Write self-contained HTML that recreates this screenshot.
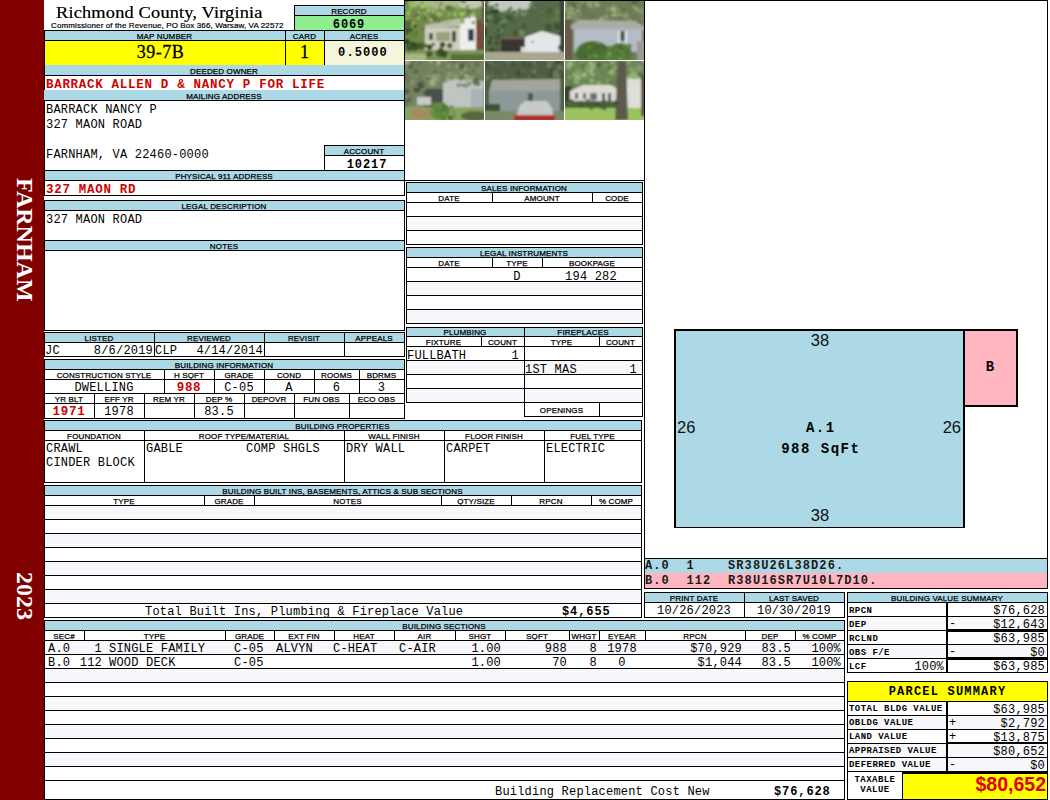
<!DOCTYPE html><html><head><meta charset="utf-8"><style>
*{margin:0;padding:0;box-sizing:border-box}
html,body{width:1050px;height:800px;overflow:hidden;background:#fff}
#p{position:relative;width:1050px;height:800px;overflow:hidden}
#p>div{position:absolute;white-space:nowrap}
.h{font-family:"Liberation Sans",sans-serif;font-size:8px;font-weight:normal;line-height:10px;color:#000;-webkit-text-stroke:0.25px #000;letter-spacing:0.15px}
.m{font-family:"Liberation Mono",monospace;font-size:12px;line-height:14px;color:#000;letter-spacing:0.2px}
.mb{font-family:"Liberation Mono",monospace;font-size:12px;font-weight:bold;line-height:14px;color:#000;letter-spacing:0.9px}
.mr{font-family:"Liberation Mono",monospace;font-size:12.5px;font-weight:bold;line-height:14px;color:#d00000;letter-spacing:0.7px}
.mbs{font-family:"Liberation Mono",monospace;font-size:12px;font-weight:bold;line-height:14px;color:#1a1a1a;letter-spacing:1.1px}
.big{font-family:"Liberation Serif",serif;font-size:17.5px;line-height:22px;color:#000;-webkit-text-stroke:0.3px #000}
.title{font-family:"Liberation Serif",serif;font-size:18.5px;line-height:22px;color:#000;-webkit-text-stroke:0.25px #000;transform:scaleY(0.93);transform-origin:0 17px;letter-spacing:0.1px}
.sub{font-family:"Liberation Sans",sans-serif;font-size:8px;line-height:10px;color:#000;letter-spacing:0.11px;-webkit-text-stroke:0.2px #000}
.sk{font-family:"Liberation Sans",sans-serif;font-size:16.5px;line-height:20px;color:#111}
.skb{font-family:"Liberation Mono",monospace;font-weight:bold;font-size:14px;line-height:18px;color:#000;letter-spacing:1.5px}
.lab{font-family:"Liberation Mono",monospace;font-size:9px;font-weight:bold;line-height:12px;color:#000;letter-spacing:0.45px}
.psum{font-family:"Liberation Mono",monospace;font-size:12px;font-weight:bold;line-height:16px;color:#000;letter-spacing:1.2px}
.tax{font-family:"Liberation Sans",sans-serif;font-size:19.5px;font-weight:bold;line-height:24px;color:#e00000}
.vt{font-family:"Liberation Serif",serif;font-size:24px;font-weight:bold;color:#fff;writing-mode:vertical-rl;line-height:32px}
</style></head><body><div id="p"><div style="left:0px;top:0px;width:44px;height:800px;background:#800000"></div>
<div class="vt" style="left:9px;top:170px;width:32px;height:140px;text-align:center;letter-spacing:0px">FARNHAM</div>
<div class="vt" style="left:9px;top:566px;width:32px;height:60px;text-align:center;letter-spacing:0px">2023</div>
<div class="title" style="left:56px;top:1px;width:244px;text-align:left;">Richmond County, Virginia</div>
<div class="sub" style="left:51px;top:21px;width:249px;text-align:left;">Commissioner of the Revenue, PO Box 366, Warsaw, VA 22572</div>
<div style="left:294px;top:5px;width:110px;height:10px;background:#add8e6"></div>
<div style="left:294px;top:15px;width:110px;height:15px;background:#90ee90"></div>
<div style="left:294px;top:5px;width:111px;height:1px;background:#000"></div>
<div style="left:294px;top:30px;width:111px;height:1px;background:#000"></div>
<div style="left:294px;top:5px;width:1px;height:26px;background:#000"></div>
<div style="left:404px;top:5px;width:1px;height:26px;background:#000"></div>
<div style="left:294px;top:15px;width:111px;height:1px;background:#000"></div>
<div class="h" style="left:294px;top:7px;width:110px;text-align:center;">RECORD</div>
<div class="mb" style="left:294px;top:18px;width:110px;text-align:center;">6069</div>
<div style="left:44px;top:30px;width:360px;height:10px;background:#add8e6"></div>
<div style="left:44px;top:40px;width:280px;height:25px;background:#ffff00"></div>
<div style="left:324px;top:40px;width:80px;height:25px;background:#f5f5dc"></div>
<div style="left:44px;top:30px;width:361px;height:1px;background:#000"></div>
<div style="left:44px;top:40px;width:361px;height:1px;background:#000"></div>
<div style="left:44px;top:65px;width:361px;height:1px;background:#000"></div>
<div style="left:44px;top:30px;width:1px;height:36px;background:#000"></div>
<div style="left:285px;top:30px;width:1px;height:36px;background:#000"></div>
<div style="left:324px;top:30px;width:1px;height:36px;background:#000"></div>
<div style="left:404px;top:0px;width:1px;height:181px;background:#000"></div>
<div class="h" style="left:44px;top:32px;width:241px;text-align:center;">MAP NUMBER</div>
<div class="h" style="left:285px;top:32px;width:39px;text-align:center;">CARD</div>
<div class="h" style="left:324px;top:32px;width:80px;text-align:center;">ACRES</div>
<div class="big" style="left:40px;top:41px;width:241px;text-align:center;font-size:18px;letter-spacing:0.5px">39-7B</div>
<div class="big" style="left:285px;top:41px;width:39px;text-align:center;font-size:18px">1</div>
<div class="mb" style="left:323px;top:46px;width:80px;text-align:center;letter-spacing:1.1px">0.5000</div>
<div style="left:44px;top:65px;width:360px;height:10px;background:#add8e6"></div>
<div style="left:44px;top:75px;width:361px;height:1px;background:#000"></div>
<div style="left:44px;top:65px;width:1px;height:106px;background:#000"></div>
<div class="h" style="left:44px;top:67px;width:360px;text-align:center;">DEEDED OWNER</div>
<div class="mr" style="left:46px;top:78px;width:358px;text-align:left;">BARRACK ALLEN D &amp; NANCY P FOR LIFE</div>
<div style="left:44px;top:90px;width:361px;height:1px;background:#000"></div>
<div style="left:44px;top:90px;width:360px;height:10px;background:#add8e6"></div>
<div style="left:44px;top:100px;width:361px;height:1px;background:#000"></div>
<div class="h" style="left:44px;top:92px;width:360px;text-align:center;">MAILING ADDRESS</div>
<div class="m" style="left:46px;top:103px;width:274px;text-align:left;">BARRACK NANCY P</div>
<div class="m" style="left:46px;top:118px;width:274px;text-align:left;">327 MAON ROAD</div>
<div class="m" style="left:46px;top:148px;width:274px;text-align:left;">FARNHAM, VA 22460-0000</div>
<div style="left:324px;top:145px;width:80px;height:10px;background:#add8e6"></div>
<div style="left:324px;top:145px;width:81px;height:1px;background:#000"></div>
<div style="left:324px;top:170px;width:81px;height:1px;background:#000"></div>
<div style="left:324px;top:145px;width:1px;height:26px;background:#000"></div>
<div style="left:404px;top:145px;width:1px;height:26px;background:#000"></div>
<div style="left:324px;top:155px;width:81px;height:1px;background:#000"></div>
<div class="h" style="left:324px;top:147px;width:80px;text-align:center;">ACCOUNT</div>
<div class="mb" style="left:327px;top:158px;width:80px;text-align:center;">10217</div>
<div style="left:44px;top:170px;width:361px;height:1px;background:#000"></div>
<div style="left:44px;top:170px;width:360px;height:10px;background:#add8e6"></div>
<div style="left:44px;top:180px;width:361px;height:1px;background:#000"></div>
<div style="left:44px;top:170px;width:361px;height:1px;background:#000"></div>
<div style="left:44px;top:195px;width:361px;height:1px;background:#000"></div>
<div style="left:44px;top:170px;width:1px;height:26px;background:#000"></div>
<div style="left:404px;top:170px;width:1px;height:26px;background:#000"></div>
<div class="h" style="left:44px;top:172px;width:360px;text-align:center;">PHYSICAL 911 ADDRESS</div>
<div class="mr" style="left:46px;top:183px;width:358px;text-align:left;">327 MAON RD</div>
<div style="left:44px;top:200px;width:360px;height:10px;background:#add8e6"></div>
<div style="left:44px;top:210px;width:361px;height:1px;background:#000"></div>
<div class="h" style="left:44px;top:202px;width:360px;text-align:center;">LEGAL DESCRIPTION</div>
<div class="m" style="left:46px;top:213px;width:358px;text-align:left;">327 MAON ROAD</div>
<div style="left:44px;top:240px;width:360px;height:10px;background:#add8e6"></div>
<div style="left:44px;top:240px;width:361px;height:1px;background:#000"></div>
<div style="left:44px;top:250px;width:361px;height:1px;background:#000"></div>
<div class="h" style="left:44px;top:242px;width:360px;text-align:center;">NOTES</div>
<div style="left:44px;top:200px;width:361px;height:1px;background:#000"></div>
<div style="left:44px;top:330px;width:361px;height:1px;background:#000"></div>
<div style="left:44px;top:200px;width:1px;height:131px;background:#000"></div>
<div style="left:404px;top:200px;width:1px;height:131px;background:#000"></div>
<div style="left:44px;top:332px;width:360px;height:10px;background:#add8e6"></div>
<div style="left:44px;top:332px;width:361px;height:1px;background:#000"></div>
<div style="left:44px;top:356px;width:361px;height:1px;background:#000"></div>
<div style="left:44px;top:332px;width:1px;height:25px;background:#000"></div>
<div style="left:404px;top:332px;width:1px;height:25px;background:#000"></div>
<div style="left:44px;top:342px;width:361px;height:1px;background:#000"></div>
<div style="left:154px;top:332px;width:1px;height:24px;background:#000"></div>
<div style="left:264px;top:332px;width:1px;height:24px;background:#000"></div>
<div style="left:344px;top:332px;width:1px;height:24px;background:#000"></div>
<div class="h" style="left:44px;top:334px;width:110px;text-align:center;">LISTED</div>
<div class="h" style="left:154px;top:334px;width:110px;text-align:center;">REVIEWED</div>
<div class="h" style="left:264px;top:334px;width:80px;text-align:center;">REVISIT</div>
<div class="h" style="left:344px;top:334px;width:60px;text-align:center;">APPEALS</div>
<div class="m" style="left:45px;top:344px;width:109px;text-align:left;">JC</div>
<div class="m" style="left:44px;top:344px;width:109px;text-align:right;">8/6/2019</div>
<div class="m" style="left:155px;top:344px;width:109px;text-align:left;">CLP</div>
<div class="m" style="left:154px;top:344px;width:109px;text-align:right;">4/14/2014</div>
<div style="left:44px;top:360px;width:360px;height:9px;background:#add8e6"></div>
<div style="left:44px;top:359px;width:361px;height:1px;background:#000"></div>
<div style="left:44px;top:418px;width:361px;height:1px;background:#000"></div>
<div style="left:44px;top:359px;width:1px;height:60px;background:#000"></div>
<div style="left:404px;top:359px;width:1px;height:60px;background:#000"></div>
<div style="left:44px;top:369px;width:361px;height:1px;background:#000"></div>
<div style="left:44px;top:379px;width:361px;height:1px;background:#000"></div>
<div style="left:44px;top:393px;width:361px;height:1px;background:#000"></div>
<div style="left:44px;top:403px;width:361px;height:1px;background:#000"></div>
<div class="h" style="left:44px;top:361px;width:360px;text-align:center;">BUILDING INFORMATION</div>
<div class="h" style="left:44px;top:371px;width:120px;text-align:center;">CONSTRUCTION STYLE</div>
<div class="m" style="left:44px;top:381px;width:120px;text-align:center;">DWELLING</div>
<div style="left:164px;top:369px;width:1px;height:24px;background:#000"></div>
<div class="h" style="left:164px;top:371px;width:50px;text-align:center;">H SQFT</div>
<div class="mr" style="left:164px;top:381px;width:50px;text-align:center;">988</div>
<div style="left:214px;top:369px;width:1px;height:24px;background:#000"></div>
<div class="h" style="left:214px;top:371px;width:50px;text-align:center;">GRADE</div>
<div class="m" style="left:214px;top:381px;width:50px;text-align:center;">C-05</div>
<div style="left:264px;top:369px;width:1px;height:24px;background:#000"></div>
<div class="h" style="left:264px;top:371px;width:50px;text-align:center;">COND</div>
<div class="m" style="left:264px;top:381px;width:50px;text-align:center;">A</div>
<div style="left:314px;top:369px;width:1px;height:24px;background:#000"></div>
<div class="h" style="left:314px;top:371px;width:45px;text-align:center;">ROOMS</div>
<div class="m" style="left:314px;top:381px;width:45px;text-align:center;">6</div>
<div style="left:359px;top:369px;width:1px;height:24px;background:#000"></div>
<div class="h" style="left:359px;top:371px;width:45px;text-align:center;">BDRMS</div>
<div class="m" style="left:359px;top:381px;width:45px;text-align:center;">3</div>
<div class="h" style="left:44px;top:395px;width:50px;text-align:center;">YR BLT</div>
<div class="mr" style="left:44px;top:405px;width:50px;text-align:center;">1971</div>
<div style="left:94px;top:393px;width:1px;height:25px;background:#000"></div>
<div class="h" style="left:94px;top:395px;width:50px;text-align:center;">EFF YR</div>
<div class="m" style="left:94px;top:405px;width:50px;text-align:center;">1978</div>
<div style="left:144px;top:393px;width:1px;height:25px;background:#000"></div>
<div class="h" style="left:144px;top:395px;width:50px;text-align:center;">REM YR</div>
<div style="left:194px;top:393px;width:1px;height:25px;background:#000"></div>
<div class="h" style="left:194px;top:395px;width:50px;text-align:center;">DEP %</div>
<div class="m" style="left:194px;top:405px;width:50px;text-align:center;">83.5</div>
<div style="left:244px;top:393px;width:1px;height:25px;background:#000"></div>
<div class="h" style="left:244px;top:395px;width:50px;text-align:center;">DEPOVR</div>
<div style="left:294px;top:393px;width:1px;height:25px;background:#000"></div>
<div class="h" style="left:294px;top:395px;width:55px;text-align:center;">FUN OBS</div>
<div style="left:349px;top:393px;width:1px;height:25px;background:#000"></div>
<div class="h" style="left:349px;top:395px;width:55px;text-align:center;">ECO OBS</div>
<div style="left:44px;top:420px;width:597px;height:10px;background:#add8e6"></div>
<div style="left:44px;top:420px;width:598px;height:1px;background:#000"></div>
<div style="left:44px;top:482px;width:598px;height:1px;background:#000"></div>
<div style="left:44px;top:420px;width:1px;height:63px;background:#000"></div>
<div style="left:641px;top:420px;width:1px;height:63px;background:#000"></div>
<div style="left:44px;top:430px;width:598px;height:1px;background:#000"></div>
<div style="left:44px;top:440px;width:598px;height:1px;background:#000"></div>
<div class="h" style="left:44px;top:422px;width:597px;text-align:center;">BUILDING PROPERTIES</div>
<div class="h" style="left:44px;top:432px;width:100px;text-align:center;">FOUNDATION</div>
<div style="left:144px;top:430px;width:1px;height:52px;background:#000"></div>
<div class="h" style="left:144px;top:432px;width:200px;text-align:center;">ROOF TYPE/MATERIAL</div>
<div style="left:344px;top:430px;width:1px;height:52px;background:#000"></div>
<div class="h" style="left:344px;top:432px;width:100px;text-align:center;">WALL FINISH</div>
<div style="left:444px;top:430px;width:1px;height:52px;background:#000"></div>
<div class="h" style="left:444px;top:432px;width:100px;text-align:center;">FLOOR FINISH</div>
<div style="left:544px;top:430px;width:1px;height:52px;background:#000"></div>
<div class="h" style="left:544px;top:432px;width:97px;text-align:center;">FUEL TYPE</div>
<div class="m" style="left:46px;top:442px;width:98px;text-align:left;">CRAWL</div>
<div class="m" style="left:46px;top:456px;width:98px;text-align:left;">CINDER BLOCK</div>
<div class="m" style="left:146px;top:442px;width:198px;text-align:left;">GABLE</div>
<div class="m" style="left:246px;top:442px;width:98px;text-align:left;">COMP SHGLS</div>
<div class="m" style="left:346px;top:442px;width:98px;text-align:left;">DRY WALL</div>
<div class="m" style="left:446px;top:442px;width:98px;text-align:left;">CARPET</div>
<div class="m" style="left:546px;top:442px;width:95px;text-align:left;">ELECTRIC</div>
<div style="left:44px;top:485px;width:597px;height:10px;background:#add8e6"></div>
<div style="left:45px;top:505px;width:596px;height:14px;background:#f7f7fc"></div>
<div style="left:45px;top:533px;width:596px;height:14px;background:#f7f7fc"></div>
<div style="left:45px;top:561px;width:596px;height:14px;background:#f7f7fc"></div>
<div style="left:45px;top:589px;width:596px;height:14px;background:#f7f7fc"></div>
<div style="left:44px;top:485px;width:598px;height:1px;background:#000"></div>
<div style="left:44px;top:617px;width:598px;height:1px;background:#000"></div>
<div style="left:44px;top:485px;width:1px;height:133px;background:#000"></div>
<div style="left:641px;top:485px;width:1px;height:133px;background:#000"></div>
<div style="left:44px;top:495px;width:598px;height:1px;background:#000"></div>
<div style="left:44px;top:505px;width:598px;height:1px;background:#000"></div>
<div style="left:44px;top:519px;width:598px;height:1px;background:#000"></div>
<div style="left:44px;top:533px;width:598px;height:1px;background:#000"></div>
<div style="left:44px;top:547px;width:598px;height:1px;background:#000"></div>
<div style="left:44px;top:561px;width:598px;height:1px;background:#000"></div>
<div style="left:44px;top:575px;width:598px;height:1px;background:#000"></div>
<div style="left:44px;top:589px;width:598px;height:1px;background:#000"></div>
<div style="left:44px;top:603px;width:598px;height:1px;background:#000"></div>
<div class="h" style="left:44px;top:487px;width:597px;text-align:center;">BUILDING BUILT INS, BASEMENTS, ATTICS &amp; SUB SECTIONS</div>
<div class="h" style="left:44px;top:497px;width:160px;text-align:center;">TYPE</div>
<div style="left:204px;top:495px;width:1px;height:10px;background:#000"></div>
<div class="h" style="left:204px;top:497px;width:50px;text-align:center;">GRADE</div>
<div style="left:254px;top:495px;width:1px;height:10px;background:#000"></div>
<div class="h" style="left:254px;top:497px;width:187px;text-align:center;">NOTES</div>
<div style="left:441px;top:495px;width:1px;height:10px;background:#000"></div>
<div class="h" style="left:441px;top:497px;width:70px;text-align:center;">QTY/SIZE</div>
<div style="left:511px;top:495px;width:1px;height:10px;background:#000"></div>
<div class="h" style="left:511px;top:497px;width:80px;text-align:center;">RPCN</div>
<div style="left:591px;top:495px;width:1px;height:10px;background:#000"></div>
<div class="h" style="left:591px;top:497px;width:50px;text-align:center;">% COMP</div>
<div class="m" style="left:145px;top:605px;width:496px;text-align:left;">Total Built Ins, Plumbing &amp; Fireplace Value</div>
<div class="mb" style="left:562px;top:605px;width:79px;text-align:left;">$4,655</div>
<div style="left:404px;top:180px;width:241px;height:1px;background:#000"></div>
<div style="left:644px;top:0px;width:1px;height:589px;background:#000"></div>
<div style="left:404px;top:0px;width:241px;height:1px;background:#000"></div>
<div style="left:406px;top:182px;width:236px;height:10px;background:#add8e6"></div>
<div style="left:407px;top:216px;width:235px;height:14px;background:#f7f7fc"></div>
<div style="left:406px;top:182px;width:237px;height:1px;background:#000"></div>
<div style="left:406px;top:244px;width:237px;height:1px;background:#000"></div>
<div style="left:406px;top:182px;width:1px;height:63px;background:#000"></div>
<div style="left:642px;top:182px;width:1px;height:63px;background:#000"></div>
<div style="left:406px;top:192px;width:237px;height:1px;background:#000"></div>
<div style="left:406px;top:202px;width:237px;height:1px;background:#000"></div>
<div style="left:406px;top:216px;width:237px;height:1px;background:#000"></div>
<div style="left:406px;top:230px;width:237px;height:1px;background:#000"></div>
<div class="h" style="left:406px;top:184px;width:236px;text-align:center;">SALES INFORMATION</div>
<div class="h" style="left:406px;top:194px;width:86px;text-align:center;">DATE</div>
<div class="h" style="left:492px;top:194px;width:100px;text-align:center;">AMOUNT</div>
<div class="h" style="left:592px;top:194px;width:50px;text-align:center;">CODE</div>
<div style="left:492px;top:192px;width:1px;height:10px;background:#000"></div>
<div style="left:592px;top:192px;width:1px;height:10px;background:#000"></div>
<div style="left:406px;top:247px;width:236px;height:10px;background:#add8e6"></div>
<div style="left:407px;top:281px;width:235px;height:14px;background:#f7f7fc"></div>
<div style="left:407px;top:309px;width:235px;height:14px;background:#f7f7fc"></div>
<div style="left:406px;top:247px;width:237px;height:1px;background:#000"></div>
<div style="left:406px;top:323px;width:237px;height:1px;background:#000"></div>
<div style="left:406px;top:247px;width:1px;height:77px;background:#000"></div>
<div style="left:642px;top:247px;width:1px;height:77px;background:#000"></div>
<div style="left:406px;top:257px;width:237px;height:1px;background:#000"></div>
<div style="left:406px;top:267px;width:237px;height:1px;background:#000"></div>
<div style="left:406px;top:281px;width:237px;height:1px;background:#000"></div>
<div style="left:406px;top:295px;width:237px;height:1px;background:#000"></div>
<div style="left:406px;top:309px;width:237px;height:1px;background:#000"></div>
<div class="h" style="left:406px;top:249px;width:236px;text-align:center;">LEGAL INSTRUMENTS</div>
<div class="h" style="left:406px;top:259px;width:86px;text-align:center;">DATE</div>
<div class="h" style="left:492px;top:259px;width:50px;text-align:center;">TYPE</div>
<div class="h" style="left:542px;top:259px;width:100px;text-align:center;">BOOKPAGE</div>
<div style="left:492px;top:257px;width:1px;height:10px;background:#000"></div>
<div style="left:542px;top:257px;width:1px;height:10px;background:#000"></div>
<div class="m" style="left:492px;top:270px;width:50px;text-align:center;">D</div>
<div class="m" style="left:541px;top:270px;width:100px;text-align:center;">194 282</div>
<div style="left:406px;top:327px;width:118px;height:10px;background:#add8e6"></div>
<div style="left:407px;top:360px;width:117px;height:14px;background:#f7f7fc"></div>
<div style="left:407px;top:388px;width:117px;height:14px;background:#f7f7fc"></div>
<div style="left:406px;top:327px;width:119px;height:1px;background:#000"></div>
<div style="left:406px;top:402px;width:119px;height:1px;background:#000"></div>
<div style="left:406px;top:327px;width:1px;height:76px;background:#000"></div>
<div style="left:524px;top:327px;width:1px;height:76px;background:#000"></div>
<div style="left:406px;top:336px;width:119px;height:1px;background:#000"></div>
<div style="left:406px;top:346px;width:119px;height:1px;background:#000"></div>
<div style="left:406px;top:360px;width:119px;height:1px;background:#000"></div>
<div style="left:406px;top:374px;width:119px;height:1px;background:#000"></div>
<div style="left:406px;top:388px;width:119px;height:1px;background:#000"></div>
<div class="h" style="left:406px;top:328px;width:118px;text-align:center;">PLUMBING</div>
<div class="h" style="left:406px;top:338px;width:75px;text-align:center;">FIXTURE</div>
<div class="h" style="left:481px;top:338px;width:43px;text-align:center;">COUNT</div>
<div style="left:481px;top:336px;width:1px;height:10px;background:#000"></div>
<div class="m" style="left:407px;top:349px;width:117px;text-align:left;">FULLBATH</div>
<div class="m" style="left:406px;top:349px;width:113px;text-align:right;">1</div>
<div style="left:524px;top:327px;width:118px;height:10px;background:#add8e6"></div>
<div style="left:525px;top:360px;width:117px;height:14px;background:#f7f7fc"></div>
<div style="left:525px;top:388px;width:117px;height:14px;background:#f7f7fc"></div>
<div style="left:524px;top:327px;width:119px;height:1px;background:#000"></div>
<div style="left:524px;top:416px;width:119px;height:1px;background:#000"></div>
<div style="left:524px;top:327px;width:1px;height:90px;background:#000"></div>
<div style="left:642px;top:327px;width:1px;height:90px;background:#000"></div>
<div style="left:524px;top:336px;width:119px;height:1px;background:#000"></div>
<div style="left:524px;top:346px;width:119px;height:1px;background:#000"></div>
<div style="left:524px;top:360px;width:119px;height:1px;background:#000"></div>
<div style="left:524px;top:374px;width:119px;height:1px;background:#000"></div>
<div style="left:524px;top:388px;width:119px;height:1px;background:#000"></div>
<div style="left:524px;top:402px;width:119px;height:1px;background:#000"></div>
<div class="h" style="left:524px;top:328px;width:118px;text-align:center;">FIREPLACES</div>
<div class="h" style="left:524px;top:338px;width:75px;text-align:center;">TYPE</div>
<div class="h" style="left:599px;top:338px;width:43px;text-align:center;">COUNT</div>
<div style="left:599px;top:336px;width:1px;height:10px;background:#000"></div>
<div class="m" style="left:525px;top:363px;width:117px;text-align:left;">1ST MAS</div>
<div class="m" style="left:524px;top:363px;width:113px;text-align:right;">1</div>
<div style="left:599px;top:402px;width:1px;height:14px;background:#000"></div>
<div class="h" style="left:524px;top:406px;width:75px;text-align:center;">OPENINGS</div>
<div style="left:1047px;top:0px;width:1px;height:589px;background:#000"></div>
<div style="left:644px;top:0px;width:404px;height:1px;background:#000"></div>
<div style="left:645px;top:559px;width:402px;height:14px;background:#add8e6"></div>
<div style="left:645px;top:573px;width:402px;height:15px;background:#ffb6c1"></div>
<div style="left:644px;top:558px;width:404px;height:1px;background:#000"></div>
<div style="left:644px;top:588px;width:404px;height:1px;background:#000"></div>
<div class="mbs" style="left:645px;top:559px;width:402px;text-align:left;">A.0&nbsp;&nbsp;1&nbsp;&nbsp;&nbsp;&nbsp;SR38U26L38D26.</div>
<div class="mbs" style="left:645px;top:574px;width:402px;text-align:left;">B.0&nbsp;&nbsp;112&nbsp;&nbsp;R38U16SR7U10L7D10.</div>
<div style="left:674px;top:329px;width:291px;height:199px;background:#000"></div>
<div style="left:676px;top:331px;width:287px;height:196px;background:#add8e6"></div>
<div style="left:963px;top:329px;width:55px;height:78px;background:#000"></div>
<div style="left:965px;top:331px;width:51px;height:74px;background:#ffb6c1"></div>
<div class="sk" style="left:790px;top:330px;width:60px;text-align:center;">38</div>
<div class="sk" style="left:790px;top:505px;width:60px;text-align:center;">38</div>
<div class="sk" style="left:677px;top:417px;width:40px;text-align:left;">26</div>
<div class="sk" style="left:900px;top:417px;width:61px;text-align:right;">26</div>
<div class="skb" style="left:760px;top:419px;width:120px;text-align:center;text-indent:1.5px">A.1</div>
<div class="skb" style="left:740px;top:440px;width:160px;text-align:center;text-indent:1.5px">988 SqFt</div>
<div class="skb" style="left:964px;top:358px;width:52px;text-align:center;text-indent:1.5px">B</div>
<div style="left:644px;top:592px;width:201px;height:10px;background:#add8e6"></div>
<div style="left:644px;top:592px;width:201px;height:1px;background:#000"></div>
<div style="left:644px;top:617px;width:201px;height:1px;background:#000"></div>
<div style="left:644px;top:592px;width:1px;height:26px;background:#000"></div>
<div style="left:844px;top:592px;width:1px;height:26px;background:#000"></div>
<div style="left:644px;top:602px;width:201px;height:1px;background:#000"></div>
<div style="left:744px;top:592px;width:1px;height:25px;background:#000"></div>
<div class="h" style="left:644px;top:594px;width:100px;text-align:center;">PRINT DATE</div>
<div class="h" style="left:744px;top:594px;width:100px;text-align:center;">LAST SAVED</div>
<div class="m" style="left:644px;top:604px;width:100px;text-align:center;">10/26/2023</div>
<div class="m" style="left:744px;top:604px;width:100px;text-align:center;">10/30/2019</div>
<div style="left:44px;top:620px;width:800px;height:10px;background:#add8e6"></div>
<div style="left:45px;top:641px;width:799px;height:14px;background:#f7f7fc"></div>
<div style="left:45px;top:669px;width:799px;height:14px;background:#f7f7fc"></div>
<div style="left:45px;top:697px;width:799px;height:14px;background:#f7f7fc"></div>
<div style="left:45px;top:725px;width:799px;height:14px;background:#f7f7fc"></div>
<div style="left:45px;top:753px;width:799px;height:14px;background:#f7f7fc"></div>
<div style="left:44px;top:620px;width:801px;height:1px;background:#000"></div>
<div style="left:44px;top:799px;width:801px;height:1px;background:#000"></div>
<div style="left:44px;top:620px;width:1px;height:180px;background:#000"></div>
<div style="left:844px;top:620px;width:1px;height:180px;background:#000"></div>
<div style="left:44px;top:630px;width:801px;height:1px;background:#000"></div>
<div style="left:44px;top:640px;width:801px;height:1px;background:#000"></div>
<div style="left:44px;top:654px;width:801px;height:1px;background:#000"></div>
<div style="left:44px;top:668px;width:801px;height:1px;background:#000"></div>
<div style="left:44px;top:682px;width:801px;height:1px;background:#000"></div>
<div style="left:44px;top:696px;width:801px;height:1px;background:#000"></div>
<div style="left:44px;top:710px;width:801px;height:1px;background:#000"></div>
<div style="left:44px;top:724px;width:801px;height:1px;background:#000"></div>
<div style="left:44px;top:738px;width:801px;height:1px;background:#000"></div>
<div style="left:44px;top:752px;width:801px;height:1px;background:#000"></div>
<div style="left:44px;top:766px;width:801px;height:1px;background:#000"></div>
<div style="left:44px;top:780px;width:801px;height:1px;background:#000"></div>
<div class="h" style="left:44px;top:622px;width:800px;text-align:center;">BUILDING SECTIONS</div>
<div class="h" style="left:44px;top:632px;width:40px;text-align:center;">SEC#</div>
<div style="left:84px;top:630px;width:1px;height:10px;background:#000"></div>
<div class="h" style="left:84px;top:632px;width:141px;text-align:center;">TYPE</div>
<div style="left:225px;top:630px;width:1px;height:10px;background:#000"></div>
<div class="h" style="left:225px;top:632px;width:49px;text-align:center;">GRADE</div>
<div style="left:274px;top:630px;width:1px;height:10px;background:#000"></div>
<div class="h" style="left:274px;top:632px;width:60px;text-align:center;">EXT FIN</div>
<div style="left:334px;top:630px;width:1px;height:10px;background:#000"></div>
<div class="h" style="left:334px;top:632px;width:60px;text-align:center;">HEAT</div>
<div style="left:394px;top:630px;width:1px;height:10px;background:#000"></div>
<div class="h" style="left:394px;top:632px;width:61px;text-align:center;">AIR</div>
<div style="left:455px;top:630px;width:1px;height:10px;background:#000"></div>
<div class="h" style="left:455px;top:632px;width:50px;text-align:center;">SHGT</div>
<div style="left:505px;top:630px;width:1px;height:10px;background:#000"></div>
<div class="h" style="left:505px;top:632px;width:64px;text-align:center;">SQFT</div>
<div style="left:569px;top:630px;width:1px;height:10px;background:#000"></div>
<div class="h" style="left:569px;top:632px;width:30px;text-align:center;">WHGT</div>
<div style="left:599px;top:630px;width:1px;height:10px;background:#000"></div>
<div class="h" style="left:599px;top:632px;width:46px;text-align:center;">EYEAR</div>
<div style="left:645px;top:630px;width:1px;height:10px;background:#000"></div>
<div class="h" style="left:645px;top:632px;width:100px;text-align:center;">RPCN</div>
<div style="left:745px;top:630px;width:1px;height:10px;background:#000"></div>
<div class="h" style="left:745px;top:632px;width:50px;text-align:center;">DEP</div>
<div style="left:795px;top:630px;width:1px;height:10px;background:#000"></div>
<div class="h" style="left:795px;top:632px;width:49px;text-align:center;">% COMP</div>
<div class="m" style="left:48px;top:642px;width:42px;text-align:left;">A.0</div>
<div class="m" style="left:48px;top:656px;width:42px;text-align:left;">B.0</div>
<div class="m" style="left:60px;top:642px;width:42px;text-align:right;">1</div>
<div class="m" style="left:60px;top:656px;width:42px;text-align:right;">112</div>
<div class="m" style="left:109px;top:642px;width:116px;text-align:left;">SINGLE FAMILY</div>
<div class="m" style="left:109px;top:656px;width:116px;text-align:left;">WOOD DECK</div>
<div class="m" style="left:234px;top:642px;width:40px;text-align:left;">C-05</div>
<div class="m" style="left:234px;top:656px;width:40px;text-align:left;">C-05</div>
<div class="m" style="left:276px;top:642px;width:58px;text-align:left;">ALVYN</div>
<div class="m" style="left:333px;top:642px;width:61px;text-align:left;">C-HEAT</div>
<div class="m" style="left:399px;top:642px;width:56px;text-align:left;">C-AIR</div>
<div class="m" style="left:455px;top:642px;width:46px;text-align:right;">1.00</div>
<div class="m" style="left:455px;top:656px;width:46px;text-align:right;">1.00</div>
<div class="m" style="left:505px;top:642px;width:62px;text-align:right;">988</div>
<div class="m" style="left:505px;top:656px;width:62px;text-align:right;">70</div>
<div class="m" style="left:569px;top:642px;width:28px;text-align:right;">8</div>
<div class="m" style="left:569px;top:656px;width:28px;text-align:right;">8</div>
<div class="m" style="left:599px;top:642px;width:46px;text-align:center;">1978</div>
<div class="m" style="left:599px;top:656px;width:46px;text-align:center;">0</div>
<div class="m" style="left:645px;top:642px;width:97px;text-align:right;">$70,929</div>
<div class="m" style="left:645px;top:656px;width:97px;text-align:right;">$1,044</div>
<div class="m" style="left:745px;top:642px;width:46px;text-align:right;">83.5</div>
<div class="m" style="left:745px;top:656px;width:46px;text-align:right;">83.5</div>
<div class="m" style="left:795px;top:642px;width:46px;text-align:right;">100%</div>
<div class="m" style="left:795px;top:656px;width:46px;text-align:right;">100%</div>
<div class="m" style="left:495px;top:785px;width:349px;text-align:left;">Building Replacement Cost New</div>
<div class="mb" style="left:774px;top:785px;width:70px;text-align:left;">$76,628</div>
<div style="left:847px;top:592px;width:200px;height:10px;background:#add8e6"></div>
<div style="left:848px;top:616px;width:199px;height:14px;background:#f7f7fc"></div>
<div style="left:848px;top:644px;width:199px;height:14px;background:#f7f7fc"></div>
<div style="left:847px;top:592px;width:201px;height:1px;background:#000"></div>
<div style="left:847px;top:672px;width:201px;height:1px;background:#000"></div>
<div style="left:847px;top:592px;width:1px;height:81px;background:#000"></div>
<div style="left:1047px;top:592px;width:1px;height:81px;background:#000"></div>
<div style="left:847px;top:602px;width:201px;height:1px;background:#000"></div>
<div style="left:847px;top:616px;width:201px;height:1px;background:#000"></div>
<div style="left:847px;top:630px;width:201px;height:1px;background:#000"></div>
<div style="left:847px;top:644px;width:201px;height:1px;background:#000"></div>
<div style="left:847px;top:658px;width:201px;height:1px;background:#000"></div>
<div style="left:947px;top:629px;width:101px;height:3px;background:#000"></div>
<div style="left:947px;top:657px;width:101px;height:3px;background:#000"></div>
<div style="left:946px;top:602px;width:2px;height:70px;background:#000"></div>
<div class="h" style="left:847px;top:594px;width:200px;text-align:center;">BUILDING VALUE SUMMARY</div>
<div class="lab" style="left:849px;top:605px;width:97px;text-align:left;">RPCN</div>
<div class="m" style="left:948px;top:604px;width:97px;text-align:right;">$76,628</div>
<div class="lab" style="left:849px;top:619px;width:97px;text-align:left;">DEP</div>
<div class="m" style="left:949px;top:617px;width:98px;text-align:left;">-</div>
<div class="m" style="left:948px;top:618px;width:97px;text-align:right;">$12,643</div>
<div class="lab" style="left:849px;top:633px;width:97px;text-align:left;">RCLND</div>
<div class="m" style="left:948px;top:632px;width:97px;text-align:right;">$63,985</div>
<div class="lab" style="left:849px;top:647px;width:97px;text-align:left;">OBS F/E</div>
<div class="m" style="left:949px;top:645px;width:98px;text-align:left;">-</div>
<div class="m" style="left:948px;top:646px;width:97px;text-align:right;">$0</div>
<div class="lab" style="left:849px;top:661px;width:97px;text-align:left;">LCF</div>
<div class="m" style="left:948px;top:660px;width:97px;text-align:right;">$63,985</div>
<div class="m" style="left:848px;top:660px;width:96px;text-align:right;">100%</div>
<div style="left:847px;top:682px;width:200px;height:19px;background:#ffff00"></div>
<div style="left:848px;top:715px;width:199px;height:14px;background:#f7f7fc"></div>
<div style="left:848px;top:743px;width:199px;height:28px;background:#f7f7fc"></div>
<div style="left:903px;top:772px;width:144px;height:27px;background:#ffff00"></div>
<div style="left:847px;top:681px;width:201px;height:1px;background:#000"></div>
<div style="left:847px;top:799px;width:201px;height:1px;background:#000"></div>
<div style="left:847px;top:681px;width:1px;height:119px;background:#000"></div>
<div style="left:1047px;top:681px;width:1px;height:119px;background:#000"></div>
<div style="left:847px;top:701px;width:201px;height:1px;background:#000"></div>
<div style="left:847px;top:715px;width:201px;height:1px;background:#000"></div>
<div style="left:847px;top:729px;width:201px;height:1px;background:#000"></div>
<div style="left:847px;top:743px;width:201px;height:1px;background:#000"></div>
<div style="left:847px;top:757px;width:201px;height:1px;background:#000"></div>
<div style="left:847px;top:771px;width:201px;height:1px;background:#000"></div>
<div style="left:947px;top:742px;width:101px;height:2px;background:#000"></div>
<div style="left:902px;top:771px;width:146px;height:3px;background:#000"></div>
<div style="left:946px;top:701px;width:2px;height:70px;background:#000"></div>
<div style="left:902px;top:771px;width:1px;height:28px;background:#000"></div>
<div class="psum" style="left:847px;top:684px;width:200px;text-align:center;text-indent:1px">PARCEL SUMMARY</div>
<div class="lab" style="left:849px;top:703px;width:97px;text-align:left;">TOTAL BLDG VALUE</div>
<div class="m" style="left:948px;top:703px;width:97px;text-align:right;">$63,985</div>
<div class="lab" style="left:849px;top:717px;width:97px;text-align:left;">OBLDG VALUE</div>
<div class="m" style="left:949px;top:716px;width:98px;text-align:left;">+</div>
<div class="m" style="left:948px;top:717px;width:97px;text-align:right;">$2,792</div>
<div class="lab" style="left:849px;top:731px;width:97px;text-align:left;">LAND VALUE</div>
<div class="m" style="left:949px;top:730px;width:98px;text-align:left;">+</div>
<div class="m" style="left:948px;top:731px;width:97px;text-align:right;">$13,875</div>
<div class="lab" style="left:849px;top:745px;width:97px;text-align:left;">APPRAISED VALUE</div>
<div class="m" style="left:948px;top:745px;width:97px;text-align:right;">$80,652</div>
<div class="lab" style="left:849px;top:759px;width:97px;text-align:left;">DEFERRED VALUE</div>
<div class="m" style="left:949px;top:758px;width:98px;text-align:left;">-</div>
<div class="m" style="left:948px;top:759px;width:97px;text-align:right;">$0</div>
<div class="lab" style="left:847px;top:774px;width:55px;text-align:center;text-indent:1px">TAXABLE</div>
<div class="lab" style="left:847px;top:784px;width:55px;text-align:center;text-indent:1px">VALUE</div>
<div class="tax" style="left:903px;top:772px;width:143px;text-align:right;">$80,652</div>
<svg style="position:absolute;left:405px;top:1px" width="79" height="59" viewBox="0 0 79 59"><defs><filter id="f4051" x="-5%" y="-5%" width="110%" height="110%"><feGaussianBlur stdDeviation="0.85"/></filter><clipPath id="c4051"><rect width="79" height="59"/></clipPath></defs><g clip-path="url(#c4051)"><g filter="url(#f4051)"><rect x="-3" y="-3" width="85" height="65" fill="#6f8748"/><ellipse cx="35" cy="3" rx="30" ry="6" fill="#a9ba86"/><ellipse cx="66" cy="3" rx="12" ry="5" fill="#c0cab0"/><circle cx="18.1" cy="2.8" r="2.4" fill="#556938"/><circle cx="31.2" cy="9.7" r="1.3" fill="#7a9650"/><circle cx="0.3" cy="11.9" r="1.3" fill="#576b39"/><circle cx="24.3" cy="24.5" r="1.4" fill="#627840"/><circle cx="36.9" cy="28.3" r="2.2" fill="#718b4a"/><circle cx="58.5" cy="-0.5" r="2.7" fill="#687f44"/><circle cx="6.9" cy="1.8" r="1.8" fill="#94b761"/><circle cx="9.2" cy="16.6" r="2.4" fill="#6f8848"/><circle cx="32.0" cy="0.0" r="1.3" fill="#60773f"/><circle cx="40.2" cy="11.7" r="1.8" fill="#819e54"/><circle cx="26.1" cy="7.6" r="2.6" fill="#8aaa5b"/><circle cx="13.1" cy="16.4" r="2.1" fill="#9abd65"/><circle cx="43.2" cy="7.2" r="3.0" fill="#596d3a"/><circle cx="23.9" cy="22.2" r="1.5" fill="#79944f"/><circle cx="0.4" cy="19.4" r="2.6" fill="#809d54"/><circle cx="52.3" cy="8.0" r="2.5" fill="#829f55"/><circle cx="34.0" cy="12.6" r="2.7" fill="#9fc468"/><circle cx="27.4" cy="19.3" r="1.3" fill="#8bab5b"/><circle cx="38.1" cy="29.8" r="2.7" fill="#677f43"/><circle cx="21.9" cy="19.4" r="1.2" fill="#76914d"/><circle cx="8.4" cy="1.7" r="1.3" fill="#90b25f"/><circle cx="6.0" cy="5.9" r="1.9" fill="#99bc64"/><circle cx="3.0" cy="12.4" r="2.2" fill="#9abe65"/><circle cx="48.8" cy="25.6" r="1.7" fill="#728d4b"/><circle cx="20.2" cy="26.3" r="2.9" fill="#5c713c"/><circle cx="8.9" cy="5.4" r="1.6" fill="#78944f"/><circle cx="34.5" cy="6.4" r="1.2" fill="#738d4b"/><circle cx="20.9" cy="16.1" r="2.9" fill="#8aaa5a"/><circle cx="30.0" cy="17.8" r="2.4" fill="#536737"/><circle cx="53.8" cy="23.0" r="2.8" fill="#93b560"/><circle cx="22.3" cy="10.8" r="1.4" fill="#85a457"/><circle cx="1.9" cy="0.2" r="1.6" fill="#5d723d"/><circle cx="19.1" cy="-0.3" r="1.2" fill="#5c713c"/><circle cx="4.3" cy="9.6" r="1.2" fill="#99bd64"/><circle cx="36.1" cy="2.8" r="1.7" fill="#6c8547"/><circle cx="20.6" cy="1.9" r="2.7" fill="#a4c96b"/><circle cx="26.9" cy="13.5" r="1.4" fill="#586c39"/><circle cx="19.2" cy="6.5" r="2.7" fill="#5d723d"/><circle cx="-0.6" cy="28.4" r="2.2" fill="#5b703c"/><circle cx="31.7" cy="-1.1" r="2.2" fill="#a2c86a"/><circle cx="51.5" cy="20.3" r="1.7" fill="#6e8848"/><circle cx="8.4" cy="22.7" r="2.2" fill="#91b35f"/><circle cx="18.4" cy="5.1" r="2.7" fill="#a3c86b"/><circle cx="50.9" cy="23.8" r="2.7" fill="#8eaf5d"/><circle cx="12.1" cy="14.6" r="1.8" fill="#516435"/><circle cx="-0.3" cy="6.9" r="1.7" fill="#8aaa5a"/><circle cx="57.3" cy="12.3" r="2.9" fill="#a3c96b"/><circle cx="57.2" cy="9.7" r="1.6" fill="#627940"/><circle cx="10.2" cy="4.5" r="2.3" fill="#9cc066"/><circle cx="50.1" cy="13.3" r="2.4" fill="#93b560"/><circle cx="3.3" cy="19.1" r="2.8" fill="#92b35f"/><circle cx="44.5" cy="13.3" r="1.5" fill="#92b460"/><circle cx="18.6" cy="23.6" r="2.9" fill="#718b4a"/><circle cx="22.9" cy="28.3" r="2.5" fill="#5d733d"/><circle cx="5.9" cy="2.8" r="2.8" fill="#94b661"/><circle cx="7.1" cy="24.4" r="3.0" fill="#87a658"/><circle cx="19.7" cy="15.6" r="1.4" fill="#506234"/><circle cx="58.2" cy="18.8" r="2.1" fill="#9fc368"/><circle cx="24.9" cy="25.9" r="2.7" fill="#61773f"/><circle cx="13.6" cy="7.4" r="1.6" fill="#819f54"/><circle cx="14.1" cy="11.4" r="1.4" fill="#9dc166"/><circle cx="19.9" cy="12.7" r="2.3" fill="#9cc066"/><circle cx="24.1" cy="27.4" r="2.1" fill="#7c9951"/><circle cx="30.5" cy="-1.4" r="2.0" fill="#5e743e"/><circle cx="-1.8" cy="23.6" r="1.5" fill="#77934e"/><circle cx="43.0" cy="15.8" r="1.8" fill="#7b9751"/><circle cx="32.4" cy="23.1" r="1.4" fill="#7f9c53"/><circle cx="13.4" cy="6.9" r="2.6" fill="#7a9650"/><circle cx="32.8" cy="22.3" r="2.8" fill="#75904c"/><circle cx="36.0" cy="14.2" r="2.1" fill="#8aaa5a"/><circle cx="8.9" cy="34.9" r="2.1" fill="#678a45"/><circle cx="14.8" cy="44.5" r="2.9" fill="#41582c"/><circle cx="11.4" cy="46.4" r="2.7" fill="#3a4f27"/><circle cx="0.9" cy="32.4" r="1.3" fill="#40562b"/><circle cx="-0.2" cy="38.7" r="2.6" fill="#648743"/><circle cx="1.7" cy="40.1" r="2.4" fill="#3b4f27"/><circle cx="19.2" cy="47.1" r="1.6" fill="#688b45"/><circle cx="7.6" cy="33.6" r="3.0" fill="#618241"/><circle cx="1.9" cy="32.1" r="2.1" fill="#465e2f"/><circle cx="2.7" cy="28.9" r="2.5" fill="#344623"/><circle cx="11.3" cy="32.3" r="1.2" fill="#455d2e"/><circle cx="13.0" cy="34.3" r="1.3" fill="#698d46"/><circle cx="16.9" cy="47.2" r="1.4" fill="#42582c"/><circle cx="-1.0" cy="41.8" r="1.7" fill="#3a4e27"/><circle cx="8.1" cy="45.5" r="2.7" fill="#41582c"/><circle cx="1.6" cy="45.7" r="2.2" fill="#5a783c"/><circle cx="0.1" cy="21.6" r="2.4" fill="#4a6432"/><circle cx="-0.3" cy="46.3" r="2.3" fill="#5f8040"/><circle cx="0.0" cy="44.0" r="1.3" fill="#638442"/><circle cx="8.9" cy="29.5" r="2.2" fill="#668944"/><circle cx="4.4" cy="23.6" r="2.1" fill="#40562b"/><circle cx="0.6" cy="24.5" r="1.3" fill="#3e5329"/><circle cx="5.5" cy="28.5" r="2.6" fill="#435a2d"/><circle cx="10.0" cy="25.0" r="1.8" fill="#344623"/><circle cx="4.0" cy="20.4" r="2.5" fill="#516d36"/><polygon points="20,24 56,17 56,25 20,29" fill="#bdbdae"/>
<rect x="20" y="27" width="36" height="25" fill="#cfcfbf"/>
<rect x="24" y="32" width="4" height="7" fill="#4a5040"/>
<rect x="31" y="31" width="14" height="9" fill="#98a080"/>
<rect x="47" y="30" width="4" height="11" fill="#3e463c"/>
<polygon points="55,22 65,14 72,17 72,54 55,54" fill="#eeeeec"/>
<rect x="63" y="28" width="6" height="12" fill="#343e50"/>
<rect x="71" y="15" width="6" height="38" fill="#7a4a38"/>
<rect x="77" y="0" width="3" height="59" fill="#5a5a40"/>
<rect x="-3" y="49" width="85" height="13" fill="#7e9658"/><circle cx="5.8" cy="44.3" r="2.9" fill="#25371a"/><circle cx="18.4" cy="43.9" r="2.2" fill="#405d2c"/><circle cx="9.9" cy="44.6" r="2.5" fill="#456530"/><circle cx="8.9" cy="47.5" r="2.6" fill="#385327"/><circle cx="10.1" cy="43.1" r="1.6" fill="#26381a"/><circle cx="3.4" cy="46.7" r="1.9" fill="#273a1b"/><circle cx="3.7" cy="47.6" r="2.8" fill="#3a5528"/><circle cx="7.6" cy="42.2" r="1.9" fill="#324922"/><circle cx="5.2" cy="44.0" r="1.9" fill="#44642f"/><circle cx="21.5" cy="44.9" r="1.9" fill="#44642f"/><circle cx="8.2" cy="43.2" r="1.5" fill="#2f4521"/><circle cx="11.5" cy="44.5" r="1.8" fill="#344c24"/><circle cx="2.1" cy="42.4" r="1.6" fill="#304621"/><circle cx="2.8" cy="40.2" r="2.0" fill="#2a3d1d"/><circle cx="35.9" cy="49.4" r="2.8" fill="#405b2c"/><circle cx="38.8" cy="53.5" r="2.2" fill="#324823"/><circle cx="44.7" cy="44.8" r="2.7" fill="#3f5a2c"/><circle cx="24.0" cy="53.0" r="3.0" fill="#3f592b"/><circle cx="39.1" cy="52.7" r="1.7" fill="#3a5328"/><circle cx="34.1" cy="53.0" r="2.9" fill="#476431"/><circle cx="35.8" cy="53.7" r="2.7" fill="#415d2d"/><circle cx="28.1" cy="43.4" r="1.7" fill="#344a24"/><circle cx="25.3" cy="53.0" r="2.4" fill="#3f592b"/><circle cx="36.8" cy="51.2" r="2.3" fill="#25351a"/><circle cx="40.5" cy="52.0" r="2.4" fill="#3b5428"/><circle cx="37.5" cy="43.8" r="2.8" fill="#2f4321"/><circle cx="24.6" cy="46.2" r="2.7" fill="#2e411f"/><circle cx="39.3" cy="54.7" r="2.3" fill="#354b24"/><circle cx="33.5" cy="51.2" r="2.8" fill="#3e582b"/><circle cx="37.1" cy="43.9" r="1.8" fill="#304321"/><rect x="-3" y="53" width="24" height="9" fill="#a8b884"/><rect x="46" y="53" width="34" height="9" fill="#5a6e3c"/><circle cx="63.8" cy="10.2" r="1.9" fill="#5a693f"/><circle cx="23.6" cy="9.6" r="2.0" fill="#9cb56c"/><circle cx="59.9" cy="9.9" r="1.8" fill="#869c5d"/><circle cx="47.5" cy="7.0" r="2.3" fill="#6c7e4b"/><circle cx="77.7" cy="20.9" r="1.0" fill="#869b5d"/><circle cx="68.4" cy="21.5" r="1.7" fill="#738650"/><circle cx="32.4" cy="21.1" r="1.3" fill="#91a965"/><circle cx="28.4" cy="13.9" r="2.4" fill="#667647"/><circle cx="68.4" cy="13.6" r="2.3" fill="#9db66d"/><circle cx="33.7" cy="20.3" r="1.7" fill="#5c6a40"/><circle cx="20.2" cy="13.4" r="1.7" fill="#768952"/><circle cx="28.3" cy="10.8" r="1.5" fill="#aac676"/><circle cx="20.1" cy="17.8" r="2.3" fill="#657546"/><circle cx="74.7" cy="17.1" r="2.4" fill="#758851"/><circle cx="42.0" cy="11.7" r="2.5" fill="#92a965"/><circle cx="41.3" cy="12.3" r="1.4" fill="#5e6d41"/><circle cx="26.0" cy="19.2" r="1.4" fill="#b4d07d"/><circle cx="34.7" cy="9.5" r="1.8" fill="#6c7d4b"/><circle cx="42.0" cy="21.3" r="2.3" fill="#a8c274"/><circle cx="57.2" cy="20.5" r="2.4" fill="#8ea563"/><circle cx="62.5" cy="5.8" r="2.1" fill="#859a5c"/><circle cx="64.4" cy="16.0" r="1.4" fill="#5e6d41"/><circle cx="74.7" cy="7.2" r="1.7" fill="#7a8e55"/><circle cx="37.6" cy="17.6" r="2.5" fill="#72854f"/><circle cx="58.7" cy="10.1" r="1.8" fill="#7f9458"/></g></g></svg>
<svg style="position:absolute;left:485px;top:1px" width="79" height="59" viewBox="0 0 79 59"><defs><filter id="f4851" x="-5%" y="-5%" width="110%" height="110%"><feGaussianBlur stdDeviation="0.85"/></filter><clipPath id="c4851"><rect width="79" height="59"/></clipPath></defs><g clip-path="url(#c4851)"><g filter="url(#f4851)"><rect x="-3" y="-3" width="85" height="65" fill="#56694a"/><ellipse cx="25" cy="3" rx="22" ry="8" fill="#c2cac0"/><circle cx="11.6" cy="9.5" r="1.7" fill="#6d8b5c"/><circle cx="38.3" cy="11.5" r="3.3" fill="#729160"/><circle cx="34.4" cy="8.7" r="1.6" fill="#425437"/><circle cx="25.7" cy="7.1" r="1.7" fill="#4b5f3f"/><circle cx="44.1" cy="34.2" r="2.9" fill="#536a46"/><circle cx="31.5" cy="21.8" r="2.1" fill="#4f6542"/><circle cx="3.0" cy="13.4" r="3.4" fill="#445639"/><circle cx="38.8" cy="25.4" r="3.2" fill="#495c3d"/><circle cx="20.0" cy="12.4" r="2.1" fill="#556c47"/><circle cx="75.3" cy="32.9" r="3.2" fill="#3e4f34"/><circle cx="0.6" cy="28.1" r="3.3" fill="#566e48"/><circle cx="45.6" cy="4.0" r="2.1" fill="#6e8c5c"/><circle cx="64.9" cy="33.1" r="3.4" fill="#4a5f3e"/><circle cx="6.8" cy="9.2" r="2.4" fill="#617c52"/><circle cx="74.3" cy="28.5" r="2.7" fill="#658155"/><circle cx="35.0" cy="22.8" r="1.3" fill="#668256"/><circle cx="16.8" cy="35.3" r="2.7" fill="#4d6241"/><circle cx="8.4" cy="12.6" r="2.7" fill="#627d52"/><circle cx="7.1" cy="6.4" r="2.4" fill="#5c754d"/><circle cx="29.4" cy="11.6" r="2.6" fill="#3e4f34"/><circle cx="22.4" cy="19.7" r="3.4" fill="#5f7950"/><circle cx="69.6" cy="20.2" r="1.7" fill="#4a5f3e"/><circle cx="75.8" cy="28.0" r="1.9" fill="#3e4f34"/><circle cx="38.4" cy="26.9" r="2.2" fill="#4b5f3f"/><circle cx="52.1" cy="35.5" r="1.7" fill="#3f5035"/><circle cx="25.4" cy="18.3" r="2.8" fill="#485b3c"/><circle cx="62.6" cy="29.1" r="2.4" fill="#485c3c"/><circle cx="76.6" cy="14.6" r="3.1" fill="#495d3e"/><circle cx="15.9" cy="29.9" r="1.9" fill="#6f8e5e"/><circle cx="38.2" cy="10.4" r="1.7" fill="#536a46"/><circle cx="51.9" cy="36.3" r="1.5" fill="#526845"/><circle cx="15.2" cy="37.1" r="1.5" fill="#405136"/><circle cx="2.9" cy="17.4" r="3.3" fill="#6c895b"/><circle cx="57.4" cy="37.9" r="3.3" fill="#4e6442"/><circle cx="13.0" cy="35.8" r="2.9" fill="#3f5035"/><circle cx="51.8" cy="16.9" r="2.1" fill="#4f6442"/><circle cx="11.7" cy="4.1" r="1.8" fill="#506643"/><circle cx="75.4" cy="8.2" r="3.4" fill="#485c3d"/><circle cx="26.9" cy="31.9" r="3.1" fill="#546b47"/><circle cx="2.0" cy="20.1" r="2.1" fill="#6e8c5c"/><circle cx="13.6" cy="16.4" r="3.3" fill="#3f5035"/><circle cx="31.3" cy="31.6" r="3.0" fill="#3f5135"/><circle cx="0.8" cy="6.1" r="3.3" fill="#4b5f3f"/><circle cx="58.5" cy="34.6" r="2.0" fill="#4b603f"/><circle cx="75.6" cy="25.0" r="1.8" fill="#637e53"/><circle cx="23.6" cy="13.4" r="1.2" fill="#658155"/><circle cx="72.2" cy="25.6" r="3.4" fill="#3e5034"/><circle cx="16.9" cy="20.2" r="3.4" fill="#6f8e5e"/><circle cx="29.3" cy="12.5" r="2.2" fill="#576f49"/><circle cx="73.2" cy="10.2" r="3.0" fill="#648054"/><circle cx="64.6" cy="30.3" r="2.6" fill="#4e6442"/><circle cx="23.9" cy="16.3" r="3.0" fill="#415337"/><circle cx="14.0" cy="29.6" r="1.8" fill="#415236"/><circle cx="0.7" cy="22.8" r="1.9" fill="#71905f"/><circle cx="69.6" cy="37.6" r="1.8" fill="#425437"/><circle cx="5.8" cy="20.9" r="2.8" fill="#556c47"/><circle cx="17.0" cy="18.2" r="2.6" fill="#617b51"/><circle cx="58.6" cy="32.8" r="2.7" fill="#435639"/><circle cx="66.1" cy="14.0" r="2.5" fill="#516744"/><circle cx="57.8" cy="10.8" r="1.8" fill="#4a5e3e"/><circle cx="10.4" cy="34.1" r="2.5" fill="#4e6442"/><circle cx="30.1" cy="37.7" r="2.4" fill="#495d3e"/><circle cx="63.5" cy="26.2" r="3.5" fill="#435538"/><circle cx="36.5" cy="31.8" r="3.1" fill="#6d8b5c"/><circle cx="1.3" cy="14.0" r="1.5" fill="#475b3c"/><circle cx="76.8" cy="23.8" r="3.3" fill="#516744"/><circle cx="68.2" cy="19.3" r="1.8" fill="#668256"/><circle cx="74.6" cy="7.6" r="2.6" fill="#5e784f"/><circle cx="15.6" cy="16.5" r="1.5" fill="#485c3c"/><circle cx="18.6" cy="24.4" r="2.7" fill="#485c3c"/><circle cx="-1.1" cy="15.1" r="2.8" fill="#475a3c"/><circle cx="23.3" cy="10.9" r="3.0" fill="#5a734c"/><circle cx="3.1" cy="7.4" r="2.1" fill="#5a734c"/><circle cx="49.8" cy="7.1" r="1.6" fill="#627d52"/><circle cx="31.2" cy="13.6" r="1.9" fill="#6f8e5e"/><circle cx="23.3" cy="23.3" r="2.0" fill="#536a46"/><circle cx="68.0" cy="37.9" r="2.0" fill="#485b3c"/><circle cx="57.0" cy="10.9" r="1.2" fill="#6d8a5b"/><circle cx="32.3" cy="31.9" r="2.1" fill="#6c895a"/><circle cx="35.3" cy="9.5" r="1.2" fill="#5a734c"/><circle cx="49.9" cy="34.9" r="1.4" fill="#5e784f"/><circle cx="28.0" cy="21.2" r="1.5" fill="#4c6140"/><circle cx="40.2" cy="35.5" r="1.5" fill="#576f49"/><circle cx="63.2" cy="36.9" r="1.7" fill="#445639"/><circle cx="74.4" cy="37.2" r="2.3" fill="#405136"/><circle cx="73.0" cy="17.2" r="3.3" fill="#5e784f"/><circle cx="64.8" cy="9.4" r="3.0" fill="#495d3d"/><circle cx="30.8" cy="32.8" r="3.1" fill="#475a3b"/><circle cx="15.7" cy="17.6" r="2.4" fill="#516844"/><circle cx="8.0" cy="12.4" r="2.9" fill="#6c8a5b"/><circle cx="-1.3" cy="32.7" r="2.6" fill="#283722"/><circle cx="13.1" cy="13.2" r="2.3" fill="#3e5434"/><circle cx="9.3" cy="21.5" r="2.0" fill="#3f5635"/><circle cx="5.7" cy="37.0" r="2.0" fill="#394e30"/><circle cx="-1.6" cy="35.2" r="2.1" fill="#304229"/><circle cx="11.7" cy="42.3" r="2.0" fill="#2e3f27"/><circle cx="6.5" cy="12.7" r="1.4" fill="#394e30"/><circle cx="-0.3" cy="27.4" r="2.1" fill="#283722"/><circle cx="9.5" cy="11.6" r="2.5" fill="#47613c"/><circle cx="7.2" cy="10.4" r="2.1" fill="#364a2e"/><circle cx="15.1" cy="14.0" r="2.7" fill="#506e44"/><circle cx="11.2" cy="43.9" r="1.5" fill="#506d44"/><circle cx="6.9" cy="50.1" r="2.8" fill="#2d3e27"/><circle cx="12.2" cy="48.9" r="1.3" fill="#35492d"/><circle cx="11.6" cy="15.0" r="2.8" fill="#32452a"/><circle cx="12.7" cy="14.3" r="2.1" fill="#4d6a41"/><circle cx="1.7" cy="19.6" r="2.1" fill="#34472c"/><circle cx="-1.3" cy="16.0" r="1.5" fill="#4e6b42"/><circle cx="10.2" cy="47.4" r="1.5" fill="#47623d"/><circle cx="0.1" cy="31.4" r="2.3" fill="#36492d"/><circle cx="13.7" cy="32.4" r="2.2" fill="#4c6740"/><circle cx="-0.1" cy="51.7" r="2.3" fill="#374b2f"/><circle cx="12.4" cy="19.6" r="3.0" fill="#3f5635"/><circle cx="4.5" cy="41.6" r="2.0" fill="#2e3f27"/><circle cx="11.4" cy="10.1" r="2.7" fill="#31432a"/><rect x="16" y="37" width="25" height="14" fill="#3a3430"/>
<rect x="15" y="36" width="27" height="2" fill="#746a5e"/>
<polygon points="40,36 57,30 75,35 75,52 40,52" fill="#e4e7ea"/>
<rect x="46" y="40" width="3" height="2" fill="#9aa0a6"/>
<rect x="36" y="46" width="5" height="5" fill="#d8dcdc"/>
<rect x="73" y="44" width="3" height="5" fill="#5a6a80"/>
<rect x="75" y="-3" width="4" height="56" fill="#3b3b32"/>
<rect x="-3" y="51" width="85" height="12" fill="#a7a68e"/></g></g></svg>
<svg style="position:absolute;left:565px;top:1px" width="79" height="59" viewBox="0 0 79 59"><defs><filter id="f5651" x="-5%" y="-5%" width="110%" height="110%"><feGaussianBlur stdDeviation="0.85"/></filter><clipPath id="c5651"><rect width="79" height="59"/></clipPath></defs><g clip-path="url(#c5651)"><g filter="url(#f5651)"><rect x="-3" y="-3" width="85" height="65" fill="#6c7b55"/><circle cx="49.8" cy="21.6" r="2.4" fill="#88996b"/><circle cx="23.3" cy="-2.0" r="1.3" fill="#616e4d"/><circle cx="47.9" cy="8.4" r="2.2" fill="#99ad79"/><circle cx="8.7" cy="3.5" r="2.5" fill="#586345"/><circle cx="-1.8" cy="6.5" r="1.4" fill="#718059"/><circle cx="16.2" cy="12.0" r="2.4" fill="#657350"/><circle cx="48.5" cy="9.4" r="1.5" fill="#9cb07b"/><circle cx="17.7" cy="1.6" r="1.4" fill="#86976a"/><circle cx="68.6" cy="16.8" r="2.0" fill="#6a7854"/><circle cx="-1.1" cy="13.5" r="2.3" fill="#707f59"/><circle cx="50.3" cy="8.7" r="3.1" fill="#8d9f6f"/><circle cx="18.1" cy="19.7" r="1.3" fill="#7e8e63"/><circle cx="30.9" cy="3.7" r="1.3" fill="#90a372"/><circle cx="-1.0" cy="11.2" r="3.1" fill="#616d4c"/><circle cx="14.2" cy="12.6" r="2.2" fill="#86976a"/><circle cx="63.9" cy="2.2" r="1.8" fill="#6d7b56"/><circle cx="1.9" cy="19.3" r="2.8" fill="#8c9e6e"/><circle cx="-1.5" cy="18.3" r="2.7" fill="#79895f"/><circle cx="58.1" cy="8.9" r="1.7" fill="#5e6a4a"/><circle cx="16.8" cy="-1.1" r="1.9" fill="#8ea070"/><circle cx="54.3" cy="18.3" r="2.6" fill="#6a7854"/><circle cx="42.9" cy="8.5" r="2.8" fill="#7d8d63"/><circle cx="19.5" cy="13.4" r="3.1" fill="#667451"/><circle cx="69.3" cy="-1.6" r="1.7" fill="#687552"/><circle cx="58.3" cy="20.7" r="2.7" fill="#6f7d57"/><circle cx="69.3" cy="5.9" r="1.7" fill="#9aae79"/><circle cx="49.1" cy="14.6" r="2.5" fill="#9fb47e"/><circle cx="36.0" cy="18.2" r="2.6" fill="#96aa77"/><circle cx="33.4" cy="15.4" r="2.3" fill="#6d7b56"/><circle cx="15.2" cy="12.9" r="1.4" fill="#9aae7a"/><circle cx="9.7" cy="-1.4" r="1.4" fill="#9bb07b"/><circle cx="25.9" cy="1.4" r="1.3" fill="#596547"/><circle cx="54.1" cy="13.2" r="2.6" fill="#8d9f6f"/><circle cx="3.3" cy="12.2" r="1.9" fill="#93a674"/><circle cx="64.4" cy="19.4" r="1.3" fill="#97aa77"/><circle cx="72.1" cy="20.7" r="1.4" fill="#667350"/><circle cx="7.1" cy="-1.2" r="2.9" fill="#93a674"/><circle cx="49.4" cy="17.8" r="2.5" fill="#6c7a55"/><circle cx="6.1" cy="0.3" r="2.7" fill="#667350"/><circle cx="23.9" cy="8.2" r="1.2" fill="#697753"/><circle cx="20.9" cy="15.2" r="1.9" fill="#6e7c57"/><circle cx="76.1" cy="10.1" r="2.9" fill="#849568"/><circle cx="0.5" cy="7.9" r="2.1" fill="#90a272"/><circle cx="26.1" cy="14.9" r="2.3" fill="#667451"/><circle cx="67.8" cy="0.2" r="2.8" fill="#63704e"/><circle cx="-1.9" cy="2.8" r="2.7" fill="#9fb47e"/><circle cx="-1.6" cy="9.8" r="2.2" fill="#92a473"/><circle cx="12.9" cy="9.9" r="1.9" fill="#94a775"/><circle cx="19.1" cy="20.7" r="1.8" fill="#667451"/><circle cx="54.7" cy="10.0" r="1.4" fill="#86976a"/><circle cx="4.6" cy="16.9" r="2.6" fill="#91a472"/><circle cx="48.9" cy="6.5" r="2.0" fill="#74835b"/><circle cx="70.1" cy="0.1" r="3.0" fill="#586446"/><circle cx="14.7" cy="4.3" r="3.0" fill="#7c8c62"/><circle cx="28.7" cy="19.2" r="1.7" fill="#79885f"/><circle cx="41.1" cy="16.1" r="2.7" fill="#86986a"/><circle cx="26.2" cy="5.8" r="1.5" fill="#95a876"/><circle cx="51.6" cy="15.8" r="1.5" fill="#77865e"/><circle cx="60.6" cy="11.9" r="1.5" fill="#79885f"/><circle cx="69.7" cy="3.7" r="1.6" fill="#6d7b56"/><circle cx="55.0" cy="18.2" r="1.5" fill="#626f4d"/><circle cx="18.1" cy="5.8" r="2.2" fill="#626f4e"/><circle cx="24.6" cy="2.5" r="3.2" fill="#8d9f6f"/><circle cx="6.2" cy="21.1" r="1.4" fill="#73825b"/><circle cx="77.7" cy="17.1" r="2.7" fill="#77865e"/><circle cx="13.9" cy="13.3" r="1.4" fill="#667350"/><circle cx="29.5" cy="-1.2" r="2.0" fill="#91a473"/><circle cx="54.2" cy="10.0" r="2.5" fill="#79885f"/><circle cx="9.5" cy="12.5" r="2.0" fill="#8da070"/><circle cx="71.5" cy="8.3" r="2.3" fill="#8ea070"/><circle cx="32.1" cy="3.5" r="2.6" fill="#98ab78"/><circle cx="60.7" cy="14.8" r="2.9" fill="#899b6c"/><circle cx="50.0" cy="8.9" r="1.8" fill="#859669"/><circle cx="5.9" cy="8.1" r="2.8" fill="#8b9d6e"/><circle cx="49.0" cy="4.0" r="2.0" fill="#78885f"/><circle cx="48.3" cy="7.8" r="2.6" fill="#9cb07b"/><circle cx="12.8" cy="13.7" r="2.8" fill="#73825b"/><circle cx="37.7" cy="21.4" r="1.3" fill="#7f8f64"/><circle cx="11.0" cy="16.8" r="3.1" fill="#7d8d63"/><circle cx="6.2" cy="11.8" r="2.3" fill="#8c9e6e"/><rect x="-3" y="18" width="10" height="42" fill="#6a5a48"/>
<polygon points="6,24 14,19 70,20 80,26 80,29 6,28" fill="#aaada6"/>
<rect x="9" y="28" width="68" height="23" fill="#b4bcc6"/>
<rect x="53" y="30" width="2" height="12" fill="#e8ecee"/>
<rect x="55" y="30" width="5" height="10" fill="#4c6050"/>
<rect x="60" y="30" width="2" height="12" fill="#e8ecee"/>
<rect x="72" y="40" width="8" height="20" fill="#9c9a94"/>
<ellipse cx="28" cy="52" rx="17" ry="12" fill="#4a6d32"/>
<ellipse cx="55" cy="52" rx="12" ry="10" fill="#55793a"/><circle cx="28.4" cy="52.9" r="2.3" fill="#507534"/><circle cx="25.1" cy="58.1" r="1.5" fill="#578039"/><circle cx="24.6" cy="55.0" r="1.4" fill="#659543"/><circle cx="23.4" cy="43.0" r="1.6" fill="#4a6d30"/><circle cx="12.4" cy="49.1" r="1.7" fill="#58813a"/><circle cx="23.3" cy="46.5" r="1.5" fill="#5a843b"/><circle cx="42.1" cy="51.0" r="1.5" fill="#5d883d"/><circle cx="24.5" cy="45.6" r="1.4" fill="#5c873c"/><circle cx="37.9" cy="52.8" r="1.8" fill="#517835"/><circle cx="19.2" cy="58.4" r="1.7" fill="#557d38"/><circle cx="38.2" cy="55.9" r="1.8" fill="#45652d"/><circle cx="29.5" cy="44.1" r="2.3" fill="#48692f"/><circle cx="39.2" cy="46.5" r="1.7" fill="#43622c"/><circle cx="25.6" cy="45.2" r="1.2" fill="#59833a"/><circle cx="21.0" cy="46.2" r="1.6" fill="#4e7233"/><circle cx="25.7" cy="52.8" r="2.1" fill="#486a2f"/><circle cx="41.7" cy="56.5" r="1.3" fill="#5e8a3e"/><circle cx="41.0" cy="55.3" r="1.4" fill="#5e8b3e"/><circle cx="32.3" cy="42.3" r="1.2" fill="#649342"/><circle cx="33.0" cy="46.3" r="1.3" fill="#3e5b28"/><circle cx="19.5" cy="55.2" r="1.7" fill="#3e5b29"/><circle cx="40.9" cy="55.5" r="1.4" fill="#618f40"/><circle cx="31.5" cy="55.3" r="2.1" fill="#618f40"/><circle cx="37.2" cy="56.3" r="1.5" fill="#58813a"/><circle cx="29.0" cy="54.6" r="1.8" fill="#618e3f"/><circle cx="56.2" cy="48.0" r="1.5" fill="#43642e"/><circle cx="54.8" cy="44.9" r="1.8" fill="#43642e"/><circle cx="54.8" cy="51.5" r="1.9" fill="#689b47"/><circle cx="44.1" cy="56.6" r="1.8" fill="#59843d"/><circle cx="58.6" cy="56.6" r="1.7" fill="#517938"/><circle cx="65.1" cy="45.1" r="2.0" fill="#5d8a3f"/><circle cx="44.6" cy="53.1" r="2.1" fill="#6ca14a"/><circle cx="51.3" cy="58.7" r="1.9" fill="#557e3a"/><circle cx="63.7" cy="44.5" r="2.1" fill="#5c893f"/><circle cx="51.4" cy="56.9" r="1.7" fill="#547e3a"/><circle cx="55.6" cy="55.6" r="1.5" fill="#527b38"/><circle cx="53.3" cy="52.3" r="2.3" fill="#4b7033"/><circle cx="62.2" cy="50.1" r="1.9" fill="#4a6e32"/><circle cx="55.1" cy="58.6" r="2.1" fill="#659645"/><circle cx="51.3" cy="48.8" r="1.6" fill="#5a863e"/><circle cx="58.0" cy="55.8" r="1.3" fill="#619142"/><circle cx="63.5" cy="52.2" r="1.3" fill="#4b7033"/><circle cx="44.1" cy="46.8" r="2.4" fill="#5b883e"/></g></g></svg>
<svg style="position:absolute;left:405px;top:61px" width="79" height="59" viewBox="0 0 79 59"><defs><filter id="f40561" x="-5%" y="-5%" width="110%" height="110%"><feGaussianBlur stdDeviation="0.85"/></filter><clipPath id="c40561"><rect width="79" height="59"/></clipPath></defs><g clip-path="url(#c40561)"><g filter="url(#f40561)"><rect x="-3" y="-3" width="85" height="65" fill="#73825e"/><circle cx="51.3" cy="16.9" r="3.0" fill="#85936c"/><circle cx="48.0" cy="13.0" r="2.6" fill="#84916b"/><circle cx="53.2" cy="3.1" r="2.5" fill="#798663"/><circle cx="59.8" cy="0.4" r="1.6" fill="#5a6349"/><circle cx="60.7" cy="19.9" r="2.5" fill="#737f5d"/><circle cx="64.6" cy="16.9" r="2.3" fill="#6a7557"/><circle cx="22.5" cy="8.1" r="1.8" fill="#778461"/><circle cx="50.0" cy="20.4" r="1.3" fill="#828f6a"/><circle cx="1.2" cy="0.9" r="2.8" fill="#82906a"/><circle cx="72.4" cy="8.7" r="1.2" fill="#74805f"/><circle cx="45.9" cy="20.5" r="3.2" fill="#7b8764"/><circle cx="31.4" cy="0.4" r="2.5" fill="#677254"/><circle cx="10.3" cy="-1.6" r="1.2" fill="#8a9971"/><circle cx="7.9" cy="21.2" r="1.4" fill="#98a87c"/><circle cx="8.4" cy="-1.6" r="2.6" fill="#697456"/><circle cx="57.4" cy="2.5" r="1.3" fill="#91a076"/><circle cx="55.8" cy="18.5" r="2.7" fill="#5d674c"/><circle cx="48.9" cy="15.0" r="2.1" fill="#9dad80"/><circle cx="18.6" cy="21.1" r="2.6" fill="#586148"/><circle cx="-0.8" cy="13.6" r="2.8" fill="#5d674c"/><circle cx="23.2" cy="15.5" r="1.5" fill="#98a77c"/><circle cx="37.4" cy="-0.6" r="1.9" fill="#82906a"/><circle cx="33.5" cy="14.2" r="1.5" fill="#93a278"/><circle cx="27.4" cy="13.5" r="2.5" fill="#768360"/><circle cx="29.2" cy="16.9" r="3.1" fill="#92a177"/><circle cx="43.9" cy="5.0" r="1.3" fill="#a0b183"/><circle cx="55.0" cy="17.9" r="1.9" fill="#84926c"/><circle cx="77.2" cy="18.0" r="2.4" fill="#6e7a5a"/><circle cx="32.7" cy="19.3" r="2.0" fill="#8a9971"/><circle cx="46.7" cy="19.5" r="2.8" fill="#6c7858"/><circle cx="-1.9" cy="4.3" r="2.0" fill="#83916b"/><circle cx="64.1" cy="19.3" r="1.3" fill="#95a57a"/><circle cx="63.8" cy="18.8" r="2.3" fill="#6c7758"/><circle cx="66.9" cy="17.4" r="2.6" fill="#9cac7f"/><circle cx="26.1" cy="0.0" r="2.3" fill="#93a278"/><circle cx="14.2" cy="16.0" r="3.1" fill="#697355"/><circle cx="47.2" cy="14.3" r="2.1" fill="#667154"/><circle cx="18.6" cy="16.0" r="2.8" fill="#798663"/><circle cx="5.1" cy="17.4" r="2.7" fill="#687355"/><circle cx="44.9" cy="19.5" r="3.0" fill="#7e8b67"/><circle cx="36.6" cy="12.1" r="1.6" fill="#657053"/><circle cx="12.6" cy="14.8" r="1.9" fill="#818f69"/><circle cx="30.6" cy="10.4" r="1.5" fill="#5a644a"/><circle cx="78.8" cy="7.0" r="1.4" fill="#86946e"/><circle cx="61.8" cy="1.7" r="2.4" fill="#717d5c"/><circle cx="40.1" cy="-1.5" r="1.3" fill="#a1b284"/><circle cx="68.2" cy="9.7" r="2.3" fill="#6b7657"/><circle cx="61.1" cy="8.2" r="3.1" fill="#91a076"/><circle cx="64.3" cy="21.1" r="1.7" fill="#5a6349"/><circle cx="14.3" cy="2.3" r="1.4" fill="#5b644a"/><circle cx="43.1" cy="18.9" r="2.1" fill="#9eaf81"/><circle cx="71.7" cy="-0.5" r="2.4" fill="#75815f"/><circle cx="7.7" cy="21.0" r="1.7" fill="#818f69"/><circle cx="49.9" cy="21.0" r="2.5" fill="#74815f"/><circle cx="34.3" cy="1.8" r="3.1" fill="#a1b284"/><circle cx="16.0" cy="-1.1" r="1.7" fill="#717d5c"/><circle cx="71.1" cy="19.7" r="2.9" fill="#5b644a"/><circle cx="61.7" cy="15.0" r="2.5" fill="#a1b283"/><circle cx="2.5" cy="1.5" r="2.7" fill="#9dae80"/><circle cx="52.8" cy="5.2" r="2.4" fill="#909f75"/><circle cx="6.5" cy="5.8" r="1.7" fill="#606a4e"/><circle cx="37.0" cy="2.0" r="1.7" fill="#626c50"/><circle cx="52.9" cy="-1.7" r="2.6" fill="#667053"/><circle cx="0.9" cy="20.3" r="1.6" fill="#9dad80"/><circle cx="68.2" cy="19.3" r="1.5" fill="#798562"/><circle cx="5.9" cy="20.3" r="2.9" fill="#86946d"/><circle cx="34.6" cy="6.2" r="2.8" fill="#7b8864"/><circle cx="48.9" cy="1.4" r="1.6" fill="#5b654a"/><circle cx="55.8" cy="11.3" r="1.5" fill="#98a87c"/><circle cx="19.6" cy="7.9" r="1.5" fill="#6b7757"/><circle cx="66.0" cy="6.0" r="1.5" fill="#7c8965"/><circle cx="23.8" cy="19.7" r="1.4" fill="#a0b183"/><circle cx="2.6" cy="19.5" r="2.5" fill="#677254"/><circle cx="36.7" cy="4.9" r="1.7" fill="#667153"/><circle cx="27.5" cy="21.8" r="3.2" fill="#9cad80"/><circle cx="5.9" cy="4.9" r="3.0" fill="#5b654a"/><circle cx="56.8" cy="5.0" r="3.2" fill="#586148"/><circle cx="63.4" cy="6.2" r="1.5" fill="#576047"/><circle cx="65.4" cy="10.6" r="1.6" fill="#788462"/><circle cx="71.9" cy="3.2" r="2.3" fill="#616c4f"/><circle cx="2.7" cy="37.7" r="2.5" fill="#4a563b"/><circle cx="0.1" cy="13.1" r="2.3" fill="#5d6d4b"/><circle cx="5.1" cy="17.4" r="2.3" fill="#6b7d57"/><circle cx="19.1" cy="31.0" r="1.6" fill="#414c34"/><circle cx="17.1" cy="24.7" r="2.5" fill="#404b34"/><circle cx="19.1" cy="22.1" r="2.7" fill="#758a5f"/><circle cx="10.8" cy="10.6" r="2.8" fill="#5c6c4a"/><circle cx="20.7" cy="19.6" r="1.5" fill="#73875d"/><circle cx="7.5" cy="15.9" r="1.9" fill="#647551"/><circle cx="-1.9" cy="28.7" r="2.0" fill="#5f6f4c"/><circle cx="1.1" cy="35.7" r="2.7" fill="#768a5f"/><circle cx="6.3" cy="35.6" r="1.9" fill="#6e8159"/><circle cx="-0.4" cy="41.4" r="2.9" fill="#5d6d4b"/><circle cx="11.3" cy="29.1" r="2.2" fill="#3e4932"/><circle cx="23.2" cy="18.1" r="1.5" fill="#434f36"/><circle cx="4.5" cy="39.4" r="1.3" fill="#434e36"/><circle cx="16.2" cy="17.0" r="1.2" fill="#647551"/><circle cx="13.0" cy="28.8" r="2.5" fill="#434f36"/><circle cx="20.6" cy="35.8" r="1.3" fill="#455037"/><circle cx="10.8" cy="28.0" r="1.7" fill="#455037"/><circle cx="8.5" cy="14.9" r="2.3" fill="#75895f"/><circle cx="1.8" cy="30.6" r="2.5" fill="#47543a"/><circle cx="19.5" cy="43.8" r="1.9" fill="#586747"/><circle cx="19.8" cy="28.9" r="1.9" fill="#7b8f63"/><circle cx="18.2" cy="22.2" r="1.6" fill="#536143"/><circle cx="9.3" cy="45.3" r="2.6" fill="#798d61"/><circle cx="19.2" cy="40.5" r="1.3" fill="#5f6f4c"/><circle cx="22.9" cy="43.6" r="1.6" fill="#586847"/><circle cx="14.4" cy="23.1" r="2.2" fill="#414c35"/><circle cx="9.3" cy="28.2" r="1.2" fill="#465238"/><polygon points="38,22 50,18 79,20 79,50 38,50" fill="#bfc5c0"/>
<rect x="66" y="28" width="13" height="22" fill="#a9b4b8"/>
<rect x="20" y="28" width="18" height="18" fill="#485048"/>
<rect x="12" y="36" width="14" height="8" fill="#c8ccc8"/>
<rect x="-3" y="46" width="85" height="16" fill="#88a262"/>
<ellipse cx="35" cy="50" rx="10" ry="9" fill="#5e8a40"/>
<rect x="7" y="48" width="18" height="9" fill="#a48a5e"/>
<ellipse cx="70" cy="55" rx="14" ry="5" fill="#55683e"/><circle cx="49.2" cy="55.2" r="2.4" fill="#669645"/><circle cx="45.2" cy="57.0" r="2.3" fill="#3f5d2b"/><circle cx="41.0" cy="46.5" r="2.0" fill="#4f7435"/><circle cx="38.6" cy="57.7" r="1.9" fill="#4d7134"/><circle cx="38.0" cy="49.4" r="2.4" fill="#507536"/><circle cx="32.6" cy="53.0" r="1.2" fill="#649344"/><circle cx="48.9" cy="50.7" r="1.4" fill="#5b863e"/><circle cx="38.3" cy="44.5" r="1.2" fill="#45662f"/><circle cx="32.3" cy="48.9" r="1.4" fill="#4d7134"/><circle cx="27.2" cy="51.3" r="2.3" fill="#659444"/><circle cx="39.3" cy="53.1" r="1.3" fill="#6b9e49"/><circle cx="36.5" cy="51.3" r="1.9" fill="#5b873e"/><circle cx="32.8" cy="46.1" r="1.3" fill="#5e8b40"/><circle cx="34.6" cy="52.0" r="1.0" fill="#547b39"/><circle cx="46.5" cy="46.1" r="1.8" fill="#5d893f"/><circle cx="32.1" cy="58.8" r="1.4" fill="#6fa44c"/><circle cx="29.0" cy="43.1" r="2.3" fill="#5a843d"/><circle cx="26.6" cy="48.6" r="1.7" fill="#6da04a"/><circle cx="44.3" cy="13.4" r="2.4" fill="#91a177"/><circle cx="46.0" cy="15.1" r="1.5" fill="#8c9a72"/><circle cx="64.0" cy="22.7" r="2.2" fill="#7e8b67"/><circle cx="68.8" cy="21.1" r="2.1" fill="#7a8764"/><circle cx="70.6" cy="20.6" r="2.4" fill="#5c654b"/><circle cx="74.0" cy="10.1" r="2.1" fill="#84926c"/><circle cx="59.4" cy="24.4" r="1.9" fill="#758260"/><circle cx="70.6" cy="23.1" r="1.9" fill="#727e5d"/><circle cx="57.6" cy="16.9" r="2.1" fill="#6a7557"/><circle cx="55.2" cy="18.3" r="1.6" fill="#6d7859"/><circle cx="70.7" cy="22.7" r="1.7" fill="#788462"/><circle cx="47.2" cy="14.6" r="1.2" fill="#83916b"/><circle cx="62.7" cy="11.3" r="2.4" fill="#6d7859"/><circle cx="72.9" cy="22.6" r="2.4" fill="#636d50"/><circle cx="56.6" cy="23.7" r="1.0" fill="#555e45"/><circle cx="62.0" cy="17.5" r="2.4" fill="#94a479"/><circle cx="61.0" cy="25.0" r="1.8" fill="#7e8b67"/><circle cx="66.7" cy="15.8" r="1.5" fill="#85936c"/><circle cx="53.7" cy="24.2" r="2.0" fill="#7f8c67"/><circle cx="43.9" cy="15.6" r="1.6" fill="#828f6a"/></g></g></svg>
<svg style="position:absolute;left:485px;top:61px" width="79" height="59" viewBox="0 0 79 59"><defs><filter id="f48561" x="-5%" y="-5%" width="110%" height="110%"><feGaussianBlur stdDeviation="0.85"/></filter><clipPath id="c48561"><rect width="79" height="59"/></clipPath></defs><g clip-path="url(#c48561)"><g filter="url(#f48561)"><rect x="-3" y="-3" width="85" height="65" fill="#4f5e42"/><circle cx="44.5" cy="16.5" r="3.1" fill="#556549"/><circle cx="33.7" cy="11.1" r="3.2" fill="#4d5c43"/><circle cx="40.9" cy="15.1" r="1.5" fill="#4c5a41"/><circle cx="77.3" cy="15.3" r="2.2" fill="#414e38"/><circle cx="70.5" cy="12.5" r="2.8" fill="#6f845f"/><circle cx="69.9" cy="6.8" r="1.5" fill="#4b5940"/><circle cx="39.4" cy="8.6" r="1.6" fill="#45523b"/><circle cx="49.0" cy="10.7" r="1.9" fill="#6f845f"/><circle cx="49.6" cy="-1.1" r="2.0" fill="#647756"/><circle cx="22.8" cy="12.5" r="1.2" fill="#4b5a41"/><circle cx="66.2" cy="10.3" r="2.5" fill="#46533c"/><circle cx="38.3" cy="9.6" r="1.7" fill="#5d6e50"/><circle cx="41.1" cy="18.9" r="2.3" fill="#516046"/><circle cx="7.8" cy="1.3" r="2.7" fill="#414d38"/><circle cx="6.1" cy="1.6" r="2.2" fill="#667958"/><circle cx="47.7" cy="14.9" r="1.3" fill="#3c4834"/><circle cx="60.4" cy="4.8" r="2.6" fill="#4e5d43"/><circle cx="11.7" cy="3.6" r="1.4" fill="#6a7e5b"/><circle cx="45.2" cy="5.3" r="2.1" fill="#505f44"/><circle cx="2.4" cy="16.7" r="2.4" fill="#6d825e"/><circle cx="33.6" cy="11.0" r="1.7" fill="#3e4a35"/><circle cx="73.4" cy="15.9" r="1.8" fill="#6a7e5b"/><circle cx="64.1" cy="4.4" r="2.4" fill="#6d825e"/><circle cx="38.1" cy="17.9" r="1.7" fill="#505f45"/><circle cx="56.2" cy="2.6" r="1.8" fill="#697c5a"/><circle cx="37.2" cy="14.6" r="1.7" fill="#45523b"/><circle cx="27.0" cy="1.9" r="3.1" fill="#4b5940"/><circle cx="43.5" cy="0.4" r="2.3" fill="#505e44"/><circle cx="30.7" cy="-0.6" r="1.4" fill="#667958"/><circle cx="26.5" cy="3.1" r="1.6" fill="#4a5840"/><circle cx="17.2" cy="-1.3" r="2.5" fill="#4d5c42"/><circle cx="10.6" cy="12.8" r="1.4" fill="#4a573f"/><circle cx="65.6" cy="0.7" r="2.1" fill="#677a58"/><circle cx="63.2" cy="1.3" r="1.9" fill="#617353"/><circle cx="28.5" cy="18.1" r="1.6" fill="#6d815e"/><circle cx="38.9" cy="2.8" r="2.1" fill="#424f39"/><circle cx="55.2" cy="3.5" r="3.0" fill="#5a6b4d"/><circle cx="27.8" cy="3.2" r="2.4" fill="#47543d"/><circle cx="68.7" cy="0.6" r="2.2" fill="#58684b"/><circle cx="19.9" cy="14.2" r="2.0" fill="#5e6f50"/><circle cx="44.0" cy="4.5" r="2.0" fill="#404c37"/><circle cx="12.3" cy="15.9" r="1.8" fill="#5e6f51"/><circle cx="6.8" cy="9.8" r="1.9" fill="#56664a"/><circle cx="22.1" cy="-0.6" r="1.8" fill="#47553d"/><circle cx="8.2" cy="13.1" r="1.8" fill="#516045"/><circle cx="71.6" cy="14.3" r="3.0" fill="#687c5a"/><circle cx="8.7" cy="3.8" r="1.3" fill="#5f7051"/><circle cx="51.8" cy="5.4" r="2.0" fill="#5e6f51"/><circle cx="54.6" cy="3.2" r="2.9" fill="#4e5c43"/><circle cx="48.9" cy="1.8" r="1.4" fill="#6b7f5c"/><circle cx="57.5" cy="13.0" r="1.3" fill="#3e4935"/><circle cx="11.1" cy="2.2" r="1.8" fill="#4f5e44"/><circle cx="1.2" cy="4.5" r="2.5" fill="#45523b"/><circle cx="66.0" cy="10.0" r="2.6" fill="#49563f"/><circle cx="33.2" cy="12.4" r="1.9" fill="#3c4733"/><circle cx="65.6" cy="14.3" r="1.8" fill="#3e4a35"/><circle cx="67.2" cy="10.8" r="1.3" fill="#48563e"/><circle cx="7.0" cy="14.6" r="1.6" fill="#6b7f5c"/><circle cx="58.7" cy="-0.2" r="2.6" fill="#505f45"/><circle cx="58.6" cy="15.4" r="1.8" fill="#404c37"/><circle cx="74.7" cy="6.9" r="3.1" fill="#5f7152"/><circle cx="57.8" cy="15.4" r="2.5" fill="#536347"/><circle cx="2.4" cy="12.7" r="2.1" fill="#56664a"/><circle cx="73.2" cy="0.7" r="2.7" fill="#3e4a35"/><circle cx="54.9" cy="14.9" r="1.7" fill="#58684c"/><circle cx="76.5" cy="11.4" r="2.3" fill="#49563e"/><circle cx="2.8" cy="5.5" r="2.0" fill="#46533c"/><circle cx="23.2" cy="0.9" r="2.6" fill="#5e7051"/><circle cx="17.3" cy="3.1" r="2.2" fill="#536247"/><circle cx="73.8" cy="5.4" r="1.8" fill="#697d5b"/><polygon points="7,19 75,18 75,30 4,31" fill="#a2a59e"/>
<rect x="4" y="30" width="71" height="20" fill="#8c9996"/>
<rect x="43" y="32" width="5" height="8" fill="#4a5a4c"/>
<rect x="-3" y="43" width="18" height="10" fill="#3e5030"/>
<rect x="-3" y="50" width="85" height="12" fill="#7a8a66"/>
<polygon points="30,59 35,44 40,40 62,40 67,47 69,59" fill="#c6cacb"/>
<rect x="29" y="54" width="41" height="6" fill="#b02c2c"/></g></g></svg>
<svg style="position:absolute;left:565px;top:61px" width="79" height="59" viewBox="0 0 79 59"><defs><filter id="f56561" x="-5%" y="-5%" width="110%" height="110%"><feGaussianBlur stdDeviation="0.85"/></filter><clipPath id="c56561"><rect width="79" height="59"/></clipPath></defs><g clip-path="url(#c56561)"><g filter="url(#f56561)"><rect x="-3" y="-3" width="85" height="65" fill="#6c8756"/><circle cx="9.5" cy="13.8" r="2.0" fill="#91b072"/><circle cx="42.4" cy="19.3" r="1.6" fill="#86a269"/><circle cx="46.5" cy="10.9" r="3.0" fill="#92b173"/><circle cx="7.3" cy="6.1" r="2.0" fill="#64794f"/><circle cx="2.9" cy="5.9" r="1.7" fill="#88a56b"/><circle cx="34.3" cy="1.2" r="1.9" fill="#77915e"/><circle cx="27.4" cy="2.7" r="1.4" fill="#566843"/><circle cx="78.4" cy="19.0" r="1.4" fill="#89a76c"/><circle cx="77.4" cy="13.8" r="1.5" fill="#79935f"/><circle cx="33.2" cy="3.3" r="2.4" fill="#566843"/><circle cx="72.5" cy="16.0" r="2.6" fill="#99ba79"/><circle cx="50.9" cy="5.0" r="1.8" fill="#5f734b"/><circle cx="0.2" cy="19.7" r="3.1" fill="#6b8154"/><circle cx="13.0" cy="15.9" r="3.1" fill="#99b978"/><circle cx="11.6" cy="20.0" r="3.1" fill="#8ba96d"/><circle cx="24.5" cy="3.2" r="3.1" fill="#6c8455"/><circle cx="27.9" cy="13.4" r="2.0" fill="#92b173"/><circle cx="17.4" cy="-0.8" r="2.5" fill="#839f67"/><circle cx="64.4" cy="17.8" r="3.3" fill="#9abb79"/><circle cx="38.0" cy="12.0" r="1.6" fill="#6b8254"/><circle cx="45.1" cy="0.2" r="2.8" fill="#61764c"/><circle cx="33.9" cy="25.2" r="1.4" fill="#586b45"/><circle cx="33.6" cy="3.3" r="2.9" fill="#556743"/><circle cx="66.1" cy="21.9" r="3.0" fill="#748d5b"/><circle cx="20.9" cy="16.5" r="2.4" fill="#748d5b"/><circle cx="25.4" cy="10.3" r="2.7" fill="#91b072"/><circle cx="71.2" cy="2.6" r="1.9" fill="#758e5c"/><circle cx="43.6" cy="7.7" r="1.6" fill="#5b6f48"/><circle cx="24.2" cy="10.9" r="3.4" fill="#97b877"/><circle cx="68.1" cy="25.3" r="3.4" fill="#829e66"/><circle cx="63.7" cy="-0.3" r="2.8" fill="#819d66"/><circle cx="22.1" cy="14.0" r="3.4" fill="#78925e"/><circle cx="50.4" cy="6.4" r="2.0" fill="#96b676"/><circle cx="0.3" cy="3.3" r="2.8" fill="#768f5c"/><circle cx="4.9" cy="16.5" r="2.1" fill="#7f9b64"/><circle cx="31.7" cy="12.8" r="2.5" fill="#728a5a"/><circle cx="7.3" cy="3.1" r="3.2" fill="#7d9862"/><circle cx="7.1" cy="22.1" r="1.8" fill="#5c7048"/><circle cx="41.0" cy="5.0" r="2.3" fill="#7d9863"/><circle cx="16.4" cy="14.0" r="1.5" fill="#7a9560"/><circle cx="45.7" cy="0.2" r="2.1" fill="#5a6e47"/><circle cx="33.6" cy="22.2" r="2.5" fill="#89a76c"/><circle cx="59.3" cy="1.2" r="3.5" fill="#8aa76c"/><circle cx="6.3" cy="21.2" r="2.1" fill="#61764d"/><circle cx="75.8" cy="13.8" r="3.0" fill="#5f734b"/><circle cx="60.9" cy="-0.4" r="1.7" fill="#708858"/><circle cx="-0.8" cy="14.6" r="1.7" fill="#6b8254"/><circle cx="55.3" cy="9.9" r="3.2" fill="#829e66"/><circle cx="68.6" cy="13.8" r="3.3" fill="#95b475"/><circle cx="11.6" cy="18.9" r="2.0" fill="#8dab6f"/><circle cx="53.1" cy="21.1" r="1.5" fill="#708858"/><circle cx="57.7" cy="24.5" r="2.9" fill="#586b45"/><circle cx="46.9" cy="0.8" r="2.5" fill="#90ae71"/><circle cx="7.2" cy="23.9" r="2.8" fill="#687e51"/><circle cx="13.6" cy="10.5" r="3.1" fill="#7f9b64"/><circle cx="7.2" cy="-1.4" r="1.5" fill="#90ae71"/><circle cx="13.0" cy="13.5" r="1.9" fill="#87a46a"/><circle cx="28.8" cy="2.0" r="3.2" fill="#7c9762"/><circle cx="53.9" cy="20.6" r="3.4" fill="#566843"/><circle cx="25.7" cy="2.2" r="2.4" fill="#95b575"/><circle cx="62.8" cy="-1.0" r="1.6" fill="#91b072"/><circle cx="53.0" cy="9.0" r="2.3" fill="#60754c"/><circle cx="66.5" cy="9.0" r="3.2" fill="#829d66"/><circle cx="4.1" cy="7.2" r="1.7" fill="#96b676"/><circle cx="45.7" cy="-0.8" r="1.6" fill="#6f8757"/><circle cx="35.9" cy="14.2" r="2.1" fill="#6f8757"/><circle cx="-1.5" cy="14.2" r="2.0" fill="#566944"/><circle cx="35.2" cy="25.6" r="1.3" fill="#60744b"/><circle cx="52.3" cy="5.6" r="1.8" fill="#7a9460"/><circle cx="19.2" cy="13.9" r="2.4" fill="#9bbc7a"/><circle cx="78.4" cy="-1.0" r="2.5" fill="#8dac6f"/><circle cx="68.7" cy="19.7" r="2.7" fill="#839f67"/><circle cx="27.4" cy="5.9" r="3.0" fill="#95b575"/><circle cx="74.0" cy="17.1" r="1.9" fill="#8dab6f"/><circle cx="57.9" cy="12.2" r="2.7" fill="#6f8657"/><circle cx="42.6" cy="9.4" r="1.3" fill="#6e8556"/><circle cx="24.2" cy="25.7" r="2.3" fill="#708858"/><circle cx="17.7" cy="4.6" r="2.0" fill="#5f734b"/><circle cx="-1.4" cy="22.4" r="2.2" fill="#768f5c"/><circle cx="44.1" cy="6.5" r="1.6" fill="#5a6d47"/><circle cx="22.4" cy="6.6" r="2.9" fill="#7d9862"/><circle cx="73.9" cy="7.5" r="3.3" fill="#809b64"/><circle cx="4.5" cy="3.0" r="2.5" fill="#9dbf7c"/><circle cx="26.9" cy="19.7" r="2.2" fill="#94b475"/><circle cx="3.5" cy="11.6" r="3.3" fill="#698053"/><circle cx="18.9" cy="-1.4" r="1.6" fill="#697f52"/><circle cx="55.1" cy="4.1" r="2.1" fill="#64794e"/><circle cx="46.8" cy="22.2" r="2.7" fill="#63794e"/><circle cx="57.4" cy="25.0" r="2.6" fill="#5b6e47"/><circle cx="63.6" cy="22.5" r="2.0" fill="#5f734b"/><rect x="-3" y="25" width="10" height="20" fill="#34452c"/>
<polygon points="5,30 18,24 46,24 54,29 54,48 5,48" fill="#dcdcd4"/>
<rect x="62" y="18" width="16" height="32" fill="#dedfd8"/>
<rect x="10" y="32" width="3" height="6" fill="#5a6070"/>
<rect x="18" y="32" width="3" height="6" fill="#5a6070"/>
<rect x="25" y="32" width="7" height="7" fill="#6a7080"/>
<rect x="37" y="32" width="3" height="9" fill="#4c5260"/>
<rect x="43" y="32" width="3" height="8" fill="#4c5260"/>
<rect x="-3" y="40" width="55" height="8" fill="#46603a"/>
<rect x="-3" y="47" width="85" height="15" fill="#9cc25e"/>
<polygon points="53,0 61,0 63,59 50,59" fill="#5c5a4e"/>
<rect x="76" y="15" width="4" height="40" fill="#5c4c3c"/><circle cx="8.2" cy="44.3" r="2.1" fill="#4c693f"/><circle cx="47.8" cy="41.7" r="1.4" fill="#527044"/><circle cx="33.0" cy="43.2" r="1.8" fill="#3e5533"/><circle cx="1.1" cy="43.3" r="1.1" fill="#4c683f"/><circle cx="16.1" cy="44.0" r="1.7" fill="#3a4f30"/><circle cx="23.0" cy="40.1" r="2.1" fill="#49643c"/><circle cx="51.3" cy="40.4" r="1.7" fill="#506f43"/><circle cx="15.8" cy="40.7" r="1.2" fill="#34472b"/><circle cx="39.4" cy="40.7" r="2.0" fill="#425a36"/><circle cx="27.1" cy="44.7" r="1.7" fill="#4d6a40"/><circle cx="30.5" cy="42.6" r="1.9" fill="#3a4f30"/><circle cx="36.4" cy="46.1" r="1.9" fill="#3c5332"/><circle cx="39.7" cy="47.8" r="1.5" fill="#3b5130"/><circle cx="26.3" cy="47.5" r="1.2" fill="#2d3f26"/><circle cx="23.7" cy="45.2" r="1.9" fill="#3f5634"/><circle cx="51.4" cy="41.8" r="1.9" fill="#314429"/><circle cx="-0.5" cy="41.1" r="1.1" fill="#46603a"/><circle cx="28.0" cy="41.5" r="2.1" fill="#3f5634"/><circle cx="6.1" cy="41.4" r="1.9" fill="#5a7c4b"/><circle cx="6.8" cy="40.2" r="1.9" fill="#394e2f"/></g></g></svg></div></body></html>
